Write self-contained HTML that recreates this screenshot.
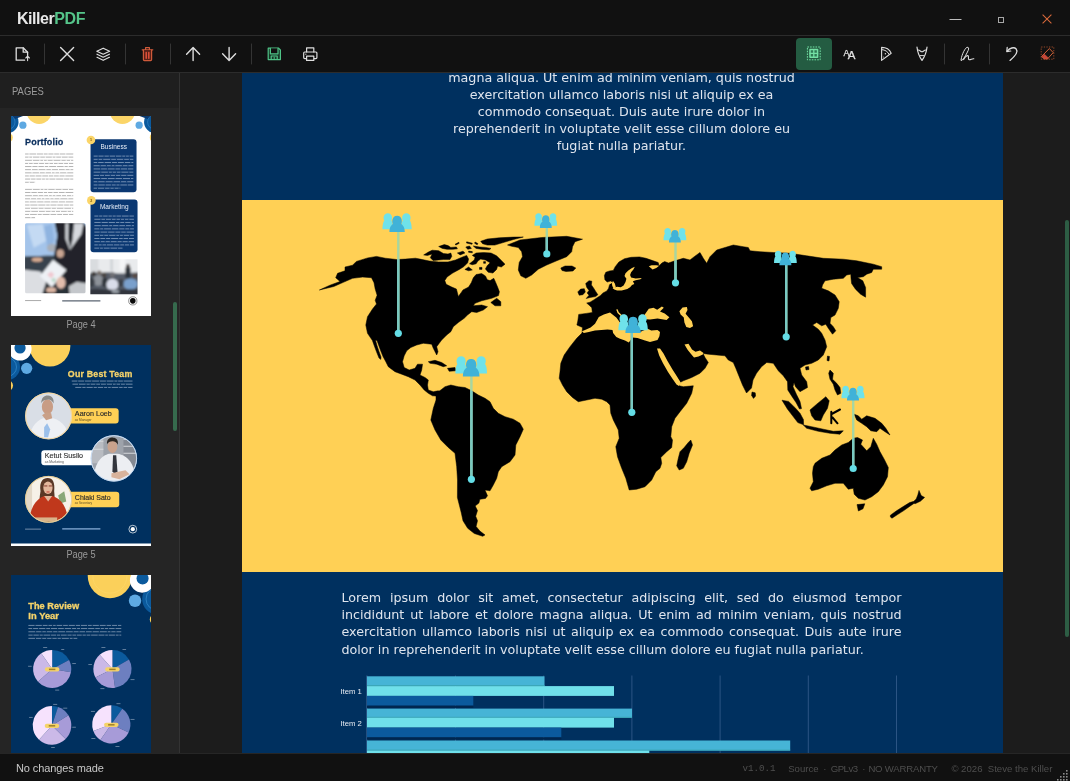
<!DOCTYPE html>
<html lang="en">
<head>
<meta charset="utf-8">
<title>KillerPDF</title>
<style>
*{box-sizing:border-box;margin:0;padding:0}
html,body{width:1070px;height:781px;overflow:hidden;background:#1c1c1c;font-family:"Liberation Sans",sans-serif;}
.abs{position:absolute}
#titlebar,#toolbar,#sidebar,#main,#status{will-change:transform}
#titlebar{position:absolute;left:0;top:0;width:1070px;height:36px;background:#111111;border-bottom:1px solid #2c2c2c}
#brand{position:absolute;left:17px;top:9px;font-size:16px;line-height:19px;font-weight:bold;color:#e8e8e8;letter-spacing:-0.45px;white-space:nowrap}
#brand span{color:#55c58a}
#toolbar{position:absolute;left:0;top:36px;width:1070px;height:37px;background:#111111;border-bottom:1px solid #2c2c2c}
.sep{position:absolute;top:7px;width:1px;height:22px;background:#343434}
.ico{position:absolute;top:0;left:0;overflow:visible}
#sidebar{position:absolute;left:0;top:73px;width:180px;height:680px;background:#252525;border-right:1px solid #333333;overflow:hidden}
#sidehead{position:absolute;left:0;top:0;width:179px;height:35px;background:#1f1f1f}
#sidehead span{position:absolute;left:12px;top:12px;font-size:11px;line-height:13px;color:#9a9a9a;transform:scaleX(0.86);transform-origin:0 0;white-space:nowrap}
.thumb{position:absolute;left:10.9px;width:140.6px;height:200.5px;overflow:hidden}
.thumb svg{width:100%;height:100%}
.tlabel{position:absolute;left:11px;width:140px;text-align:center;font-size:10px;line-height:12px;color:#9a9a9a;transform:scaleX(0.92)}
#sscroll{position:absolute;left:173px;top:228.5px;width:4px;height:129.5px;border-radius:2px;background:#366a4d}
#main{position:absolute;left:180px;top:73px;width:890px;height:680px;background:#1c1c1c;overflow:hidden}
#page{position:absolute;left:61.5px;top:0;width:761px;height:680px;background:#00305f;overflow:hidden}
#mscroll{position:absolute;left:885px;top:147px;width:4px;height:417px;border-radius:2px;background:#2d5d44}
#yellow{position:absolute;left:0;top:126.8px;width:761px;height:372.4px;background:#ffd055}
.ptxt{position:absolute;color:#dfe5ee;font-family:"DejaVu Sans","Liberation Sans",sans-serif;font-size:12.7px;line-height:17.1px;white-space:nowrap}
#status{position:absolute;left:0;top:753px;width:1070px;height:28px;background:#111111;border-top:1px solid #262626}
#status .l{position:absolute;left:16px;top:7.5px;font-size:11px;line-height:13px;color:#c8c8c8;letter-spacing:-0.1px}
#status .r{position:absolute;top:8.5px;font-size:9.6px;line-height:12px;color:#4e4e4e;white-space:nowrap}
</style>
</head>
<body>
<div id="titlebar">
  <div id="brand">Killer<span>PDF</span></div>
<svg class="abs" style="left:0;top:0" width="1070" height="36" viewBox="0 0 1070 36" fill="none">
<path d="M949.5 19.5H961.5" stroke="#bdbdbd" stroke-width="1"/>
<rect x="998.5" y="17.5" width="5" height="5" stroke="#a8a8a8" stroke-width="1"/>
<path d="M1042.6 14.6L1051.4 23.4M1051.4 14.6L1042.6 23.4" stroke="#d8693b" stroke-width="1.05"/>
</svg>

</div>
<div id="toolbar">
<svg class="abs" style="left:0;top:0" width="1070" height="37" viewBox="0 36 1070 37" fill="none" stroke-linecap="round" stroke-linejoin="round">
<g stroke="#343434" stroke-width="1"><path d="M44.5 44v20M125.5 44v20M170.5 44v20M251.5 44v20M944.5 44v20M989.5 44v20"/></g>
<rect x="796" y="38" width="36" height="32" rx="4" fill="#245c42"/>
<g stroke="#dedede" stroke-width="1.3">
<!-- new / open document -->
<path d="M27.6 55.6V52.2L23.2 47.8H16.2V60.2H24.6"/><path d="M23.2 47.8V52.2H27.6"/><path d="M27.6 60.6V56.4M25.8 58L27.6 56.2L29.4 58" stroke-width="1.1"/>
<!-- close -->
<path d="M60.6 47.6L73.6 60.6M73.6 47.6L60.6 60.6" stroke-width="1.4"/>
<!-- layers -->
<path d="M103.2 48.2L109.6 51.2L103.2 54.2L96.8 51.2Z" stroke-width="1.2"/><path d="M97 54.2L103.2 57.2L109.4 54.2M97 57.3L103.2 60.3L109.4 57.3" stroke-width="1.2"/>
<!-- arrows -->
<path d="M193.1 60.6V47.8M186.6 54.2L193.1 47.6L199.6 54.2" stroke-width="1.4"/>
<path d="M229.1 47.4V60.2M222.6 53.8L229.1 60.4L235.6 53.8" stroke-width="1.4"/>
<!-- print -->
<path d="M306.6 52V47.8H313.8V52" stroke-width="1.2"/><rect x="303.7" y="52" width="13.2" height="6.6" rx="1" stroke-width="1.2"/><rect x="306.6" y="56.2" width="7.2" height="4.2" fill="#111111" stroke-width="1.2"/><path d="M305.6 54.2h0.4" stroke-width="1"/>
<!-- highlighter / pizza -->
<path d="M881.6 47.4V60.4L891.2 53.2C889.6 49.6 886 47.4 881.6 47.4Z" stroke-width="1.1"/><path d="M881.8 49.6C885.2 49.8 887.8 51.6 889.2 54.4" stroke-width="1"/><circle cx="885.4" cy="53.8" r="0.7" fill="#dedede" stroke="none"/><circle cx="883.6" cy="57" r="0.5" fill="#dedede" stroke="none"/>
<!-- nib -->
<path d="M917 47.2C917.6 52.4 919.6 57 922 60.4C924.4 57 926.4 52.4 927 47.2" stroke-width="1.2"/><path d="M917.8 50.2C919.4 49.4 920.6 51.8 922 51.8C923.4 51.8 924.6 49.4 926.2 50.2" stroke-width="1.1"/><path d="M920.4 55.6H923.6" stroke-width="1"/>
<!-- signature -->
<path d="M961.2 60.2C960.6 57.6 964.4 48.6 966.8 47.4C968.8 46.6 969 48.6 968.2 50.4C966.8 53.6 964.2 58.2 962.4 60C961.8 60.6 961.4 60.6 961.2 60.2Z" stroke-width="1"/><path d="M963.6 59.6C965 56.8 967.2 55 968.2 55.8C969.2 56.8 967.4 59.4 969.2 59.8C970.8 60 972.2 58.4 973.8 58.8" stroke-width="1.1"/>
<!-- undo -->
<path d="M1007.2 47.4L1006.8 51.6L1010.8 51" stroke-width="1.2"/><path d="M1007.2 51.2C1009.6 48 1014 46.6 1016.2 49C1018.4 51.6 1016.6 54.8 1010 60.4" stroke-width="1.3"/>
</g>
<!-- AA as text -->
<g fill="#e2e2e2" stroke="#e2e2e2" stroke-width="0.25" font-family="'Liberation Sans',sans-serif"><text x="843.6" y="55.6" font-size="8.8">A</text><text x="847.8" y="59.1" font-size="11.5">A</text></g>
<!-- delete -->
<g stroke="#cf5a3a" stroke-width="1.2"><path d="M142.2 49.8H152.8M145.6 49.6V47.6H149.4V49.6"/><path d="M143.4 50V59.6C143.4 60.2 143.8 60.6 144.4 60.6H150.6C151.2 60.6 151.6 60.2 151.6 59.6V50" fill="#5a2118"/><path d="M146.2 52.4V58.2M148.8 52.4V58.2" stroke="#e0503a" stroke-width="1.5"/></g>
<!-- save -->
<g stroke="#4fc487" stroke-width="1.2"><path d="M268.2 48.2H278.6L280.4 50V59.6H268.2Z" fill="#173526"/><path d="M270.4 48.4V53.8H278V48.4" fill="#111"/><path d="M271.2 59.4V56H277.2V59.4" /><path d="M274.2 57.2v1.6" stroke-width="1"/></g>
<!-- select (active) -->
<g stroke="#73e0a4"><rect x="807.4" y="47" width="12.8" height="12.8" stroke-width="1" stroke-dasharray="1.6 1.1" stroke-linecap="butt"/><rect x="810" y="49.6" width="7.6" height="7.6" stroke-width="1.5" fill="#2f7a55"/><path d="M813.8 49.6V57.2M810 53.4H817.6" stroke-width="1.3"/></g>
<!-- erase -->
<g stroke="#cf6238"><rect x="1041.2" y="47" width="12.6" height="12.2" stroke-width="0.8" stroke-dasharray="1.3 1.3" stroke-linecap="butt" stroke="#b4562f"/><path d="M1049.6 48.8L1053.2 52.6L1047.6 58.8L1044 58.8L1042 56.6Z" stroke-width="1" fill="#111"/><path d="M1044.4 54.2L1048.4 58L1047.6 58.8H1044L1042 56.6Z" fill="#c9483a" stroke="#d8503c" stroke-width="0.6"/></g>
</svg>

</div>
<div id="sidebar">
  <div id="sidehead"><span>PAGES</span></div>
  <div class="thumb" id="t4" style="top:42.8px;background:#ffffff">
<svg viewBox="0 0 140 200" preserveAspectRatio="none" style="display:block">
<defs><filter id="b1" x="-5%" y="-5%" width="110%" height="110%"><feGaussianBlur stdDeviation="0.9"/></filter><filter id="b0"><feGaussianBlur stdDeviation="0.35"/></filter><clipPath id="cp1"><rect x="14" y="107" width="60.2" height="69.8" rx="1.5"/></clipPath><clipPath id="cp2"><rect x="79" y="143" width="47" height="34.8"/></clipPath></defs>
<rect width="140" height="200" fill="#ffffff"/>
<circle cx="28" cy="-4.5" r="12.5" fill="#fbd568"/><circle cx="111" cy="-4.5" r="12.5" fill="#fbd568"/>
<circle cx="-3.5" cy="6" r="11" fill="#0b5a9d"/><circle cx="143.5" cy="6" r="11" fill="#0b5a9d"/><path d="M0 0H12L4 3Z M140 0H128L136 3Z" fill="#0a3a70"/>
<circle cx="-3.5" cy="6" r="7.5" fill="none" stroke="#3f8fd0" stroke-width="0.5"/><circle cx="143.5" cy="6" r="7.5" fill="none" stroke="#3f8fd0" stroke-width="0.5"/>
<circle cx="11.8" cy="9.2" r="3.6" fill="#5ea9e2"/><circle cx="127.6" cy="9.2" r="3.6" fill="#5ea9e2"/>
<circle cx="-2.2" cy="21.5" r="4" fill="#fbd568"/><circle cx="142.2" cy="21.5" r="4" fill="#fbd568"/>
<text x="14" y="29.2" font-family="'Liberation Sans',sans-serif" font-weight="bold" font-size="9" letter-spacing="0.15" fill="#0b2f5e" stroke="#0b2f5e" stroke-width="0.25">Portfolio</text>
<g filter="url(#b0)">
<g fill="#6a6a6a" opacity="0.5"><rect x="14.0" y="37.4" width="48.0" height="1.0"/><rect x="14.0" y="40.5" width="48.0" height="1.0"/><rect x="14.0" y="43.7" width="48.0" height="1.0"/><rect x="14.0" y="46.8" width="48.0" height="1.0"/><rect x="14.0" y="49.9" width="48.0" height="1.0"/><rect x="14.0" y="53.0" width="48.0" height="1.0"/><rect x="14.0" y="56.2" width="48.0" height="1.0"/><rect x="14.0" y="59.3" width="48.0" height="1.0"/><rect x="14.0" y="62.4" width="48.0" height="1.0"/><rect x="14.0" y="65.6" width="10.0" height="1.0"/></g>
<g fill="#6a6a6a" opacity="0.5"><rect x="14.0" y="72.7" width="48.0" height="1.0"/><rect x="14.0" y="75.8" width="48.0" height="1.0"/><rect x="14.0" y="79.0" width="48.0" height="1.0"/><rect x="14.0" y="82.1" width="48.0" height="1.0"/><rect x="14.0" y="85.2" width="48.0" height="1.0"/><rect x="14.0" y="88.3" width="48.0" height="1.0"/><rect x="14.0" y="91.5" width="48.0" height="1.0"/><rect x="14.0" y="94.6" width="48.0" height="1.0"/><rect x="14.0" y="97.7" width="48.0" height="1.0"/><rect x="14.0" y="100.9" width="10.0" height="1.0"/></g>
</g>
<rect x="79.2" y="23.2" width="45.8" height="52.8" rx="3" fill="#0b3872"/>
<rect x="79.2" y="83.4" width="46.8" height="52.6" rx="3" fill="#0b3872"/>
<circle cx="79.6" cy="24" r="4.3" fill="#fbd568"/><circle cx="80" cy="84.2" r="4.3" fill="#fbd568"/>
<g font-family="'Liberation Sans',sans-serif" fill="#7a5a10" font-size="3.6" font-weight="bold" text-anchor="middle"><text x="79.6" y="25.3">1</text><text x="80" y="85.5">2</text></g>
<g font-family="'Liberation Sans',sans-serif" fill="#e8eef8" font-size="6.5" text-anchor="middle"><text x="102.3" y="32.8">Business</text><text x="102.8" y="92.9">Marketing</text></g>
<g filter="url(#b0)">
<g fill="#d5e0f0" opacity="0.5"><rect x="82.3" y="39.5" width="39.5" height="1.0"/><rect x="82.3" y="42.7" width="39.5" height="1.0"/><rect x="82.3" y="45.9" width="39.5" height="1.0"/><rect x="82.3" y="49.1" width="39.5" height="1.0"/><rect x="82.3" y="52.3" width="39.5" height="1.0"/><rect x="82.3" y="55.5" width="39.5" height="1.0"/><rect x="82.3" y="58.7" width="39.5" height="1.0"/><rect x="82.3" y="61.9" width="39.5" height="1.0"/><rect x="82.3" y="65.1" width="39.5" height="1.0"/><rect x="82.3" y="68.3" width="39.5" height="1.0"/><rect x="82.3" y="71.5" width="26.7" height="1.0"/></g>
<g fill="#d5e0f0" opacity="0.5"><rect x="83.0" y="99.3" width="39.4" height="1.0"/><rect x="83.0" y="102.5" width="39.4" height="1.0"/><rect x="83.0" y="105.7" width="39.4" height="1.0"/><rect x="83.0" y="108.9" width="39.4" height="1.0"/><rect x="83.0" y="112.1" width="39.4" height="1.0"/><rect x="83.0" y="115.3" width="39.4" height="1.0"/><rect x="83.0" y="118.5" width="39.4" height="1.0"/><rect x="83.0" y="121.7" width="39.4" height="1.0"/><rect x="83.0" y="124.9" width="39.4" height="1.0"/><rect x="83.0" y="128.1" width="39.4" height="1.0"/><rect x="83.0" y="131.3" width="28.0" height="1.0"/></g>
</g>
<g fill="#ffffff"><rect x="17.5" y="37.1" width="0.9" height="1.6"/><rect x="24.9" y="37.1" width="0.9" height="1.6"/><rect x="31.8" y="37.1" width="0.9" height="1.6"/><rect x="36.4" y="37.1" width="0.9" height="1.6"/><rect x="42.2" y="37.1" width="0.9" height="1.6"/><rect x="47.7" y="37.1" width="0.9" height="1.6"/><rect x="54.1" y="37.1" width="0.9" height="1.6"/><rect x="17.4" y="40.2" width="0.9" height="1.6"/><rect x="21.0" y="40.2" width="0.9" height="1.6"/><rect x="28.3" y="40.2" width="0.9" height="1.6"/><rect x="33.7" y="40.2" width="0.9" height="1.6"/><rect x="40.6" y="40.2" width="0.9" height="1.6"/><rect x="44.2" y="40.2" width="0.9" height="1.6"/><rect x="49.7" y="40.2" width="0.9" height="1.6"/><rect x="56.4" y="40.2" width="0.9" height="1.6"/><rect x="20.8" y="43.4" width="0.9" height="1.6"/><rect x="28.3" y="43.4" width="0.9" height="1.6"/><rect x="32.0" y="43.4" width="0.9" height="1.6"/><rect x="35.6" y="43.4" width="0.9" height="1.6"/><rect x="41.5" y="43.4" width="0.9" height="1.6"/><rect x="49.3" y="43.4" width="0.9" height="1.6"/><rect x="54.5" y="43.4" width="0.9" height="1.6"/><rect x="58.9" y="43.4" width="0.9" height="1.6"/><rect x="17.1" y="46.5" width="0.9" height="1.6"/><rect x="21.6" y="46.5" width="0.9" height="1.6"/><rect x="27.1" y="46.5" width="0.9" height="1.6"/><rect x="32.8" y="46.5" width="0.9" height="1.6"/><rect x="37.4" y="46.5" width="0.9" height="1.6"/><rect x="41.9" y="46.5" width="0.9" height="1.6"/><rect x="46.4" y="46.5" width="0.9" height="1.6"/><rect x="52.0" y="46.5" width="0.9" height="1.6"/><rect x="56.8" y="46.5" width="0.9" height="1.6"/><rect x="20.4" y="49.6" width="0.9" height="1.6"/><rect x="26.4" y="49.6" width="0.9" height="1.6"/><rect x="32.7" y="49.6" width="0.9" height="1.6"/><rect x="37.1" y="49.6" width="0.9" height="1.6"/><rect x="45.0" y="49.6" width="0.9" height="1.6"/><rect x="52.4" y="49.6" width="0.9" height="1.6"/><rect x="56.5" y="49.6" width="0.9" height="1.6"/><rect x="19.9" y="52.8" width="0.9" height="1.6"/><rect x="26.6" y="52.8" width="0.9" height="1.6"/><rect x="34.3" y="52.8" width="0.9" height="1.6"/><rect x="39.7" y="52.8" width="0.9" height="1.6"/><rect x="46.9" y="52.8" width="0.9" height="1.6"/><rect x="53.5" y="52.8" width="0.9" height="1.6"/><rect x="58.3" y="52.8" width="0.9" height="1.6"/><rect x="20.5" y="55.9" width="0.9" height="1.6"/><rect x="27.8" y="55.9" width="0.9" height="1.6"/><rect x="33.6" y="55.9" width="0.9" height="1.6"/><rect x="39.8" y="55.9" width="0.9" height="1.6"/><rect x="43.4" y="55.9" width="0.9" height="1.6"/><rect x="48.0" y="55.9" width="0.9" height="1.6"/><rect x="55.1" y="55.9" width="0.9" height="1.6"/><rect x="17.7" y="59.0" width="0.9" height="1.6"/><rect x="23.7" y="59.0" width="0.9" height="1.6"/><rect x="30.3" y="59.0" width="0.9" height="1.6"/><rect x="36.9" y="59.0" width="0.9" height="1.6"/><rect x="42.0" y="59.0" width="0.9" height="1.6"/><rect x="47.5" y="59.0" width="0.9" height="1.6"/><rect x="53.3" y="59.0" width="0.9" height="1.6"/><rect x="19.1" y="62.1" width="0.9" height="1.6"/><rect x="24.4" y="62.1" width="0.9" height="1.6"/><rect x="30.1" y="62.1" width="0.9" height="1.6"/><rect x="33.7" y="62.1" width="0.9" height="1.6"/><rect x="37.4" y="62.1" width="0.9" height="1.6"/><rect x="44.1" y="62.1" width="0.9" height="1.6"/><rect x="52.0" y="62.1" width="0.9" height="1.6"/><rect x="58.1" y="62.1" width="0.9" height="1.6"/><rect x="17.7" y="65.3" width="0.9" height="1.6"/><rect x="23.4" y="65.3" width="0.9" height="1.6"/><rect x="31.4" y="65.3" width="0.9" height="1.6"/><rect x="38.3" y="65.3" width="0.9" height="1.6"/><rect x="44.3" y="65.3" width="0.9" height="1.6"/><rect x="51.6" y="65.3" width="0.9" height="1.6"/><rect x="56.2" y="65.3" width="0.9" height="1.6"/></g><g fill="#ffffff"><rect x="20.8" y="72.4" width="0.9" height="1.6"/><rect x="28.6" y="72.4" width="0.9" height="1.6"/><rect x="32.3" y="72.4" width="0.9" height="1.6"/><rect x="36.2" y="72.4" width="0.9" height="1.6"/><rect x="43.5" y="72.4" width="0.9" height="1.6"/><rect x="50.3" y="72.4" width="0.9" height="1.6"/><rect x="56.8" y="72.4" width="0.9" height="1.6"/><rect x="19.4" y="75.5" width="0.9" height="1.6"/><rect x="25.7" y="75.5" width="0.9" height="1.6"/><rect x="31.8" y="75.5" width="0.9" height="1.6"/><rect x="36.0" y="75.5" width="0.9" height="1.6"/><rect x="41.4" y="75.5" width="0.9" height="1.6"/><rect x="46.7" y="75.5" width="0.9" height="1.6"/><rect x="53.4" y="75.5" width="0.9" height="1.6"/><rect x="20.8" y="78.7" width="0.9" height="1.6"/><rect x="26.7" y="78.7" width="0.9" height="1.6"/><rect x="32.2" y="78.7" width="0.9" height="1.6"/><rect x="37.0" y="78.7" width="0.9" height="1.6"/><rect x="40.6" y="78.7" width="0.9" height="1.6"/><rect x="44.2" y="78.7" width="0.9" height="1.6"/><rect x="49.8" y="78.7" width="0.9" height="1.6"/><rect x="54.8" y="78.7" width="0.9" height="1.6"/><rect x="60.0" y="78.7" width="0.9" height="1.6"/><rect x="19.1" y="81.8" width="0.9" height="1.6"/><rect x="25.1" y="81.8" width="0.9" height="1.6"/><rect x="29.7" y="81.8" width="0.9" height="1.6"/><rect x="33.3" y="81.8" width="0.9" height="1.6"/><rect x="38.3" y="81.8" width="0.9" height="1.6"/><rect x="42.4" y="81.8" width="0.9" height="1.6"/><rect x="48.2" y="81.8" width="0.9" height="1.6"/><rect x="56.2" y="81.8" width="0.9" height="1.6"/><rect x="17.7" y="84.9" width="0.9" height="1.6"/><rect x="25.2" y="84.9" width="0.9" height="1.6"/><rect x="32.3" y="84.9" width="0.9" height="1.6"/><rect x="39.1" y="84.9" width="0.9" height="1.6"/><rect x="46.7" y="84.9" width="0.9" height="1.6"/><rect x="53.7" y="84.9" width="0.9" height="1.6"/><rect x="18.4" y="88.0" width="0.9" height="1.6"/><rect x="26.3" y="88.0" width="0.9" height="1.6"/><rect x="34.2" y="88.0" width="0.9" height="1.6"/><rect x="38.4" y="88.0" width="0.9" height="1.6"/><rect x="45.3" y="88.0" width="0.9" height="1.6"/><rect x="52.0" y="88.0" width="0.9" height="1.6"/><rect x="57.6" y="88.0" width="0.9" height="1.6"/><rect x="19.0" y="91.2" width="0.9" height="1.6"/><rect x="26.6" y="91.2" width="0.9" height="1.6"/><rect x="32.4" y="91.2" width="0.9" height="1.6"/><rect x="39.6" y="91.2" width="0.9" height="1.6"/><rect x="44.7" y="91.2" width="0.9" height="1.6"/><rect x="52.2" y="91.2" width="0.9" height="1.6"/><rect x="59.7" y="91.2" width="0.9" height="1.6"/><rect x="19.3" y="94.3" width="0.9" height="1.6"/><rect x="26.9" y="94.3" width="0.9" height="1.6"/><rect x="33.7" y="94.3" width="0.9" height="1.6"/><rect x="39.4" y="94.3" width="0.9" height="1.6"/><rect x="43.9" y="94.3" width="0.9" height="1.6"/><rect x="48.8" y="94.3" width="0.9" height="1.6"/><rect x="55.5" y="94.3" width="0.9" height="1.6"/><rect x="59.7" y="94.3" width="0.9" height="1.6"/><rect x="18.1" y="97.4" width="0.9" height="1.6"/><rect x="25.7" y="97.4" width="0.9" height="1.6"/><rect x="30.6" y="97.4" width="0.9" height="1.6"/><rect x="38.4" y="97.4" width="0.9" height="1.6"/><rect x="45.1" y="97.4" width="0.9" height="1.6"/><rect x="50.8" y="97.4" width="0.9" height="1.6"/><rect x="56.7" y="97.4" width="0.9" height="1.6"/><rect x="19.4" y="100.6" width="0.9" height="1.6"/><rect x="24.3" y="100.6" width="0.9" height="1.6"/><rect x="28.7" y="100.6" width="0.9" height="1.6"/><rect x="34.5" y="100.6" width="0.9" height="1.6"/><rect x="42.2" y="100.6" width="0.9" height="1.6"/><rect x="48.5" y="100.6" width="0.9" height="1.6"/><rect x="52.3" y="100.6" width="0.9" height="1.6"/><rect x="59.5" y="100.6" width="0.9" height="1.6"/></g><g fill="#0b3872"><rect x="86.3" y="39.2" width="0.9" height="1.6"/><rect x="92.2" y="39.2" width="0.9" height="1.6"/><rect x="97.4" y="39.2" width="0.9" height="1.6"/><rect x="103.6" y="39.2" width="0.9" height="1.6"/><rect x="109.9" y="39.2" width="0.9" height="1.6"/><rect x="113.7" y="39.2" width="0.9" height="1.6"/><rect x="117.3" y="39.2" width="0.9" height="1.6"/><rect x="86.3" y="42.4" width="0.9" height="1.6"/><rect x="90.9" y="42.4" width="0.9" height="1.6"/><rect x="98.9" y="42.4" width="0.9" height="1.6"/><rect x="104.5" y="42.4" width="0.9" height="1.6"/><rect x="111.8" y="42.4" width="0.9" height="1.6"/><rect x="117.4" y="42.4" width="0.9" height="1.6"/><rect x="85.9" y="45.6" width="0.9" height="1.6"/><rect x="92.3" y="45.6" width="0.9" height="1.6"/><rect x="99.7" y="45.6" width="0.9" height="1.6"/><rect x="105.5" y="45.6" width="0.9" height="1.6"/><rect x="112.4" y="45.6" width="0.9" height="1.6"/><rect x="118.9" y="45.6" width="0.9" height="1.6"/><rect x="88.3" y="48.8" width="0.9" height="1.6"/><rect x="94.5" y="48.8" width="0.9" height="1.6"/><rect x="99.3" y="48.8" width="0.9" height="1.6"/><rect x="103.0" y="48.8" width="0.9" height="1.6"/><rect x="110.4" y="48.8" width="0.9" height="1.6"/><rect x="116.0" y="48.8" width="0.9" height="1.6"/><rect x="88.8" y="52.0" width="0.9" height="1.6"/><rect x="95.5" y="52.0" width="0.9" height="1.6"/><rect x="103.2" y="52.0" width="0.9" height="1.6"/><rect x="108.5" y="52.0" width="0.9" height="1.6"/><rect x="115.6" y="52.0" width="0.9" height="1.6"/><rect x="89.0" y="55.2" width="0.9" height="1.6"/><rect x="96.5" y="55.2" width="0.9" height="1.6"/><rect x="100.4" y="55.2" width="0.9" height="1.6"/><rect x="104.5" y="55.2" width="0.9" height="1.6"/><rect x="109.0" y="55.2" width="0.9" height="1.6"/><rect x="116.9" y="55.2" width="0.9" height="1.6"/><rect x="87.8" y="58.4" width="0.9" height="1.6"/><rect x="92.7" y="58.4" width="0.9" height="1.6"/><rect x="98.4" y="58.4" width="0.9" height="1.6"/><rect x="103.7" y="58.4" width="0.9" height="1.6"/><rect x="108.8" y="58.4" width="0.9" height="1.6"/><rect x="114.9" y="58.4" width="0.9" height="1.6"/><rect x="88.9" y="61.6" width="0.9" height="1.6"/><rect x="95.5" y="61.6" width="0.9" height="1.6"/><rect x="103.2" y="61.6" width="0.9" height="1.6"/><rect x="110.5" y="61.6" width="0.9" height="1.6"/><rect x="118.5" y="61.6" width="0.9" height="1.6"/><rect x="86.0" y="64.8" width="0.9" height="1.6"/><rect x="93.3" y="64.8" width="0.9" height="1.6"/><rect x="101.2" y="64.8" width="0.9" height="1.6"/><rect x="108.7" y="64.8" width="0.9" height="1.6"/><rect x="114.8" y="64.8" width="0.9" height="1.6"/><rect x="86.1" y="68.0" width="0.9" height="1.6"/><rect x="93.4" y="68.0" width="0.9" height="1.6"/><rect x="99.5" y="68.0" width="0.9" height="1.6"/><rect x="104.2" y="68.0" width="0.9" height="1.6"/><rect x="108.0" y="68.0" width="0.9" height="1.6"/><rect x="115.4" y="68.0" width="0.9" height="1.6"/><rect x="85.7" y="71.2" width="0.9" height="1.6"/><rect x="92.8" y="71.2" width="0.9" height="1.6"/><rect x="98.1" y="71.2" width="0.9" height="1.6"/><rect x="102.3" y="71.2" width="0.9" height="1.6"/><rect x="107.1" y="71.2" width="0.9" height="1.6"/><rect x="114.1" y="71.2" width="0.9" height="1.6"/></g><g fill="#0b3872"><rect x="86.9" y="99.0" width="0.9" height="1.6"/><rect x="90.9" y="99.0" width="0.9" height="1.6"/><rect x="96.2" y="99.0" width="0.9" height="1.6"/><rect x="100.4" y="99.0" width="0.9" height="1.6"/><rect x="104.2" y="99.0" width="0.9" height="1.6"/><rect x="109.5" y="99.0" width="0.9" height="1.6"/><rect x="117.1" y="99.0" width="0.9" height="1.6"/><rect x="89.1" y="102.2" width="0.9" height="1.6"/><rect x="93.6" y="102.2" width="0.9" height="1.6"/><rect x="99.5" y="102.2" width="0.9" height="1.6"/><rect x="104.2" y="102.2" width="0.9" height="1.6"/><rect x="108.5" y="102.2" width="0.9" height="1.6"/><rect x="112.5" y="102.2" width="0.9" height="1.6"/><rect x="116.9" y="102.2" width="0.9" height="1.6"/><rect x="89.3" y="105.4" width="0.9" height="1.6"/><rect x="96.4" y="105.4" width="0.9" height="1.6"/><rect x="103.5" y="105.4" width="0.9" height="1.6"/><rect x="107.9" y="105.4" width="0.9" height="1.6"/><rect x="112.8" y="105.4" width="0.9" height="1.6"/><rect x="119.1" y="105.4" width="0.9" height="1.6"/><rect x="89.4" y="108.6" width="0.9" height="1.6"/><rect x="96.9" y="108.6" width="0.9" height="1.6"/><rect x="100.8" y="108.6" width="0.9" height="1.6"/><rect x="107.0" y="108.6" width="0.9" height="1.6"/><rect x="113.5" y="108.6" width="0.9" height="1.6"/><rect x="119.3" y="108.6" width="0.9" height="1.6"/><rect x="87.9" y="111.8" width="0.9" height="1.6"/><rect x="91.8" y="111.8" width="0.9" height="1.6"/><rect x="99.5" y="111.8" width="0.9" height="1.6"/><rect x="106.9" y="111.8" width="0.9" height="1.6"/><rect x="112.9" y="111.8" width="0.9" height="1.6"/><rect x="117.7" y="111.8" width="0.9" height="1.6"/><rect x="88.3" y="115.0" width="0.9" height="1.6"/><rect x="95.8" y="115.0" width="0.9" height="1.6"/><rect x="103.1" y="115.0" width="0.9" height="1.6"/><rect x="108.9" y="115.0" width="0.9" height="1.6"/><rect x="114.2" y="115.0" width="0.9" height="1.6"/><rect x="87.7" y="118.2" width="0.9" height="1.6"/><rect x="92.0" y="118.2" width="0.9" height="1.6"/><rect x="96.8" y="118.2" width="0.9" height="1.6"/><rect x="104.0" y="118.2" width="0.9" height="1.6"/><rect x="107.7" y="118.2" width="0.9" height="1.6"/><rect x="111.4" y="118.2" width="0.9" height="1.6"/><rect x="117.7" y="118.2" width="0.9" height="1.6"/><rect x="88.1" y="121.4" width="0.9" height="1.6"/><rect x="93.8" y="121.4" width="0.9" height="1.6"/><rect x="98.8" y="121.4" width="0.9" height="1.6"/><rect x="106.8" y="121.4" width="0.9" height="1.6"/><rect x="111.2" y="121.4" width="0.9" height="1.6"/><rect x="116.5" y="121.4" width="0.9" height="1.6"/><rect x="88.5" y="124.6" width="0.9" height="1.6"/><rect x="93.3" y="124.6" width="0.9" height="1.6"/><rect x="98.4" y="124.6" width="0.9" height="1.6"/><rect x="105.2" y="124.6" width="0.9" height="1.6"/><rect x="110.2" y="124.6" width="0.9" height="1.6"/><rect x="116.2" y="124.6" width="0.9" height="1.6"/><rect x="86.4" y="127.8" width="0.9" height="1.6"/><rect x="90.2" y="127.8" width="0.9" height="1.6"/><rect x="94.7" y="127.8" width="0.9" height="1.6"/><rect x="101.7" y="127.8" width="0.9" height="1.6"/><rect x="107.9" y="127.8" width="0.9" height="1.6"/><rect x="112.5" y="127.8" width="0.9" height="1.6"/><rect x="117.5" y="127.8" width="0.9" height="1.6"/><rect x="87.8" y="131.0" width="0.9" height="1.6"/><rect x="91.5" y="131.0" width="0.9" height="1.6"/><rect x="98.2" y="131.0" width="0.9" height="1.6"/><rect x="105.7" y="131.0" width="0.9" height="1.6"/><rect x="113.5" y="131.0" width="0.9" height="1.6"/><rect x="120.3" y="131.0" width="0.9" height="1.6"/></g>
<g clip-path="url(#cp1)"><g filter="url(#b1)">
<rect x="10" y="103" width="70" height="80" fill="#2a3038"/>
<path d="M10 103H42.9L46.3 119.1L42.9 139.4H35L10 140.5Z" fill="#a4c4ea"/>
<path d="M15.9 109L31.6 107.8L35 124.7L22.6 131.5Z" fill="#c4daf3"/>
<path d="M33 110L41 108L43 124L37 136Z" fill="#8fb4e0"/>
<path d="M10 140.5L35 139.4H42.9L48.5 155.2L37.3 160.8L10 152.9Z" fill="#38434d"/>
<ellipse cx="26" cy="143.3" rx="5.5" ry="2.2" fill="#d9ac92"/>
<ellipse cx="40.7" cy="131.5" rx="5" ry="4" fill="#a9afb8"/>
<path d="M42.9 103H80V183H57.6L54.2 160.8L48.5 155.2L42.9 139.4L46.3 119.1Z" fill="#20242a"/>
<path d="M54.2 107L72.2 107L70 118L58.7 133.7L54.2 122.5Z" fill="#d6d9de"/>
<path d="M57.2 106H63L61.2 124L59.2 132.4L56.8 123Z" fill="#22262d"/>
<path d="M68.8 103H80V114.6Z" fill="#a4c4ea"/>
<ellipse cx="49.1" cy="137.1" rx="3.6" ry="4.2" fill="#c9a592"/>
<path d="M10 152.9L29.4 155.2L35 165.3L29.4 183H10Z" fill="#dcdee2"/>
<path d="M28.8 159.7L41.8 143.3L55.3 153.5L40.6 170.9Z" fill="#eef1f5"/>
<path d="M36 158l4 -3l3 3l-3 4z" fill="#f0c8d0"/><path d="M40 163l3 -2l2 3l-3 2z" fill="#b8d8c8"/>
<ellipse cx="49.7" cy="166.4" rx="4.6" ry="6" fill="#e2bcab"/>
<ellipse cx="40" cy="173.5" rx="5" ry="2.6" fill="#dcb5a2"/>
<path d="M57.6 169.8L65.4 165.3L80 167.6V183H58.7Z" fill="#c4c7cb"/>
</g></g>
<g clip-path="url(#cp2)"><g filter="url(#b1)">
<rect x="76" y="140" width="54" height="42" fill="#e9ebed"/>
<rect x="76" y="140" width="11" height="17" fill="#d9dcdf"/><rect x="99" y="140" width="2.4" height="15" fill="#cdd1d5"/><rect x="108" y="140" width="6" height="14" fill="#f4f5f6"/>
<path d="M76 158C82 155 88 157 94 156C100 155 106 158 112 157C118 156 124 157 130 155V182H76Z" fill="#555c67"/>
<rect x="113.9" y="150.9" width="5.2" height="11" rx="1" fill="#2c3037"/><circle cx="116.4" cy="149.6" r="1.9" fill="#3a3330"/>
<ellipse cx="82.3" cy="157.6" rx="2.2" ry="2.4" fill="#3b3632"/><ellipse cx="88" cy="156.4" rx="2.2" ry="2.4" fill="#7a716a"/><ellipse cx="92.7" cy="158.6" rx="2.2" ry="2.4" fill="#4a433e"/><ellipse cx="101" cy="158.4" rx="2.5" ry="2.7" fill="#6f6f74"/><ellipse cx="123.5" cy="159" rx="2.3" ry="2.5" fill="#5a4a40"/>
<ellipse cx="86.8" cy="164" rx="5" ry="5.4" fill="#8d9299"/><ellipse cx="80" cy="166" rx="3.4" ry="5" fill="#3a3f47"/><ellipse cx="93.5" cy="166" rx="3" ry="5" fill="#2f343b"/>
<ellipse cx="100.9" cy="168.1" rx="6" ry="5.8" fill="#d9ddea"/><ellipse cx="119" cy="167.6" rx="7.2" ry="5.6" fill="#7aa0cc"/><ellipse cx="109.5" cy="166.5" rx="2.6" ry="4" fill="#3a3f47"/>
<path d="M76 173C86 171 96 174 104 173C112 172 122 174 130 172V182H76Z" fill="#30353c"/>
<ellipse cx="104" cy="175" rx="4" ry="1.6" fill="#9aa0a8"/>
</g></g>
<rect x="14" y="183.6" width="16" height="1" fill="#888" opacity="0.7"/>
<rect x="51" y="184" width="38" height="0.9" fill="#1c2a3c"/>
<circle cx="121.3" cy="184.4" r="4.1" fill="#fff" stroke="#222" stroke-width="0.5"/><circle cx="121.3" cy="184.4" r="2.8" fill="#0a0a0a"/>
</svg>
</div>
  <div class="tlabel" style="top:246.4px">Page 4</div>
  <div class="thumb" id="t5" style="top:272.4px;background:#ffffff">
<svg viewBox="0 0 140 200" preserveAspectRatio="none" style="display:block">
<defs><filter id="c1" x="-5%" y="-5%" width="110%" height="110%"><feGaussianBlur stdDeviation="0.7"/></filter><filter id="c0"><feGaussianBlur stdDeviation="0.3"/></filter>
<clipPath id="pc1"><circle cx="37.4" cy="70.8" r="22.4"/></clipPath><clipPath id="pc2"><circle cx="102.4" cy="113.1" r="22.3"/></clipPath><clipPath id="pc3"><circle cx="37.4" cy="154" r="22.6"/></clipPath></defs>
<rect width="140" height="200" fill="#ffffff"/><rect width="140" height="198" fill="#00305f"/>
<circle cx="38.7" cy="1" r="20.4" fill="#fbd05a"/>
<circle cx="-4" cy="22" r="13" fill="#0b5a9d"/><circle cx="-4" cy="22" r="9.5" fill="none" stroke="#4aa3e0" stroke-width="0.5"/>
<circle cx="9" cy="4" r="11.5" fill="#ffffff"/><circle cx="9" cy="3" r="5.6" fill="#0b5a9d"/>
<circle cx="15.6" cy="23.3" r="5.6" fill="#5ea9e2"/>
<circle cx="-3.6" cy="40.5" r="5.6" fill="#fbd05a"/>
<text x="121" y="32" font-family="'Liberation Sans',sans-serif" font-weight="bold" font-size="8.8" fill="#f5d36a" stroke="#f5d36a" stroke-width="0.3" text-anchor="end" letter-spacing="0.2">Our Best Team</text>
<g filter="url(#c0)"><g fill="#c9d4e6" opacity="0.6"><rect x="60.5" y="35.5" width="60.5" height="0.9"/><rect x="61.2" y="38.6" width="59.8" height="0.9"/><rect x="64.0" y="41.8" width="57.0" height="0.9"/></g></g>
<g fill="#00305f"><rect x="66.0" y="35.2" width="0.9" height="1.6"/><rect x="72.8" y="35.2" width="0.9" height="1.6"/><rect x="79.9" y="35.2" width="0.9" height="1.6"/><rect x="87.6" y="35.2" width="0.9" height="1.6"/><rect x="94.5" y="35.2" width="0.9" height="1.6"/><rect x="102.1" y="35.2" width="0.9" height="1.6"/><rect x="105.8" y="35.2" width="0.9" height="1.6"/><rect x="111.4" y="35.2" width="0.9" height="1.6"/><rect x="66.8" y="38.3" width="0.9" height="1.6"/><rect x="74.3" y="38.3" width="0.9" height="1.6"/><rect x="78.4" y="38.3" width="0.9" height="1.6"/><rect x="84.0" y="38.3" width="0.9" height="1.6"/><rect x="88.6" y="38.3" width="0.9" height="1.6"/><rect x="94.5" y="38.3" width="0.9" height="1.6"/><rect x="100.6" y="38.3" width="0.9" height="1.6"/><rect x="104.2" y="38.3" width="0.9" height="1.6"/><rect x="108.6" y="38.3" width="0.9" height="1.6"/><rect x="113.4" y="38.3" width="0.9" height="1.6"/><rect x="70.1" y="41.4" width="0.9" height="1.6"/><rect x="74.3" y="41.4" width="0.9" height="1.6"/><rect x="81.4" y="41.4" width="0.9" height="1.6"/><rect x="85.5" y="41.4" width="0.9" height="1.6"/><rect x="91.8" y="41.4" width="0.9" height="1.6"/><rect x="95.8" y="41.4" width="0.9" height="1.6"/><rect x="99.3" y="41.4" width="0.9" height="1.6"/><rect x="106.8" y="41.4" width="0.9" height="1.6"/><rect x="111.2" y="41.4" width="0.9" height="1.6"/><rect x="115.7" y="41.4" width="0.9" height="1.6"/></g>
<rect x="50" y="63" width="57.2" height="15.2" rx="3" fill="#ffd055"/>
<circle cx="37.4" cy="70.8" r="23.3" fill="#f0d7a8"/>
<g clip-path="url(#pc1)"><g filter="url(#c1)"><rect x="12" y="45" width="52" height="52" fill="#d9dee6"/>
<path d="M18 97C18 84 24 76 32 73L42 73C52 76 58 84 58 97Z" fill="#eef0f4"/>
<ellipse cx="36.3" cy="61.5" rx="5.6" ry="7.4" fill="#c89c84"/><path d="M30.2 58C30 52 34 50 37 50.4C41 50.6 43 54 42.4 58.4C41 55 38 54 36 54.6C33 54.8 31 56 30.2 58Z" fill="#8a8884"/>
<path d="M31 70l4 -3l5 1l1 5l-6 2z" fill="#c9a088"/><path d="M33 82l3 -4l3 6l-2 8l-4 0z" fill="#9cc0ea"/>
</g></g>
<circle cx="37.4" cy="70.8" r="22.9" fill="none" stroke="#f0d7a8" stroke-width="0.9"/>
<text x="63.6" y="71.2" font-family="'Liberation Sans',sans-serif" font-size="6.3" fill="#2a2a2a" stroke="#2a2a2a" stroke-width="0.12" textLength="36.8" lengthAdjust="spacingAndGlyphs">Aaron Loeb</text>
<text x="63.6" y="75.6" font-family="'Liberation Sans',sans-serif" font-size="2.9" fill="#5a4a20" textLength="16.6" lengthAdjust="spacingAndGlyphs">as Manager</text>
<rect x="30.2" y="105" width="55" height="15" rx="3" fill="#ffffff"/>
<text x="33.7" y="113.2" font-family="'Liberation Sans',sans-serif" font-size="6.3" fill="#333" stroke="#333" stroke-width="0.12" textLength="38.1" lengthAdjust="spacingAndGlyphs">Ketut Susilo</text>
<text x="33.7" y="117.4" font-family="'Liberation Sans',sans-serif" font-size="2.9" fill="#555" textLength="19" lengthAdjust="spacingAndGlyphs">as Marketing</text>
<circle cx="102.4" cy="113.1" r="23" fill="#c9dcf2"/>
<g clip-path="url(#pc2)"><g filter="url(#c1)"><rect x="78" y="88" width="50" height="50" fill="#9ea3ab"/>
<rect x="78" y="88" width="14" height="30" fill="#b9bcc2"/><rect x="112" y="88" width="16" height="34" fill="#858a93"/><path d="M112 94h16M112 101h16M112 108h16M80 96h12M80 104h12" stroke="#d5d8dc" stroke-width="1.2"/>
<path d="M82 138C82 118 90 110 98 108.5L106 108.5C116 110 124 118 124 138Z" fill="#eceef2"/>
<path d="M101.6 110L104.8 110L106 126L103.4 129L101 126Z" fill="#30343c"/>
<ellipse cx="101" cy="101.4" rx="4.9" ry="6.3" fill="#c9a28c"/><path d="M95.6 99C95 93.6 99 92.2 101.6 92.4C105 92.4 107 95 106.4 99.4C105 96.6 102.6 95.8 101 96C98.6 96.2 96.6 97 95.6 99Z" fill="#2b2622"/>
<path d="M100 128l14 -3l4 4l-10 5l-8 -2z" fill="#d8b39c"/>
</g></g>
<circle cx="102.4" cy="113.1" r="22.7" fill="none" stroke="#c9dcf2" stroke-width="0.9"/>
<rect x="50" y="146.4" width="57.8" height="15.5" rx="3" fill="#ffd055"/>
<circle cx="37.4" cy="154" r="23.4" fill="#e8cf9a"/>
<g clip-path="url(#pc3)"><g filter="url(#c1)"><rect x="12" y="128" width="52" height="52" fill="#f6f1e8"/>
<rect x="12" y="128" width="9" height="52" fill="#e2d8c8"/><path d="M47 150l6 -4l2 10l-6 2z" fill="#8aa878"/>
<path d="M29.4 146C28 136 32 132.6 36.4 132.6C41.6 132.6 44 137 43 146C43.6 152 44 158 42 161L30 161C27.6 156 28.6 151 29.4 146Z" fill="#5a3826"/>
<ellipse cx="36.8" cy="142.4" rx="4.6" ry="6.2" fill="#e3b79c"/><path d="M33 140.6h3.2M37.6 140.6h3.2" stroke="#7a2a20" stroke-width="0.9"/><path d="M35.4 146.6h3" stroke="#c23a2a" stroke-width="0.9"/>
<path d="M18 180C18 164 24 154 33 150.6L41 150.6C50 153 57 162 57 180Z" fill="#c0391f"/>
<path d="M33 150.6L37 156L41 150.6Z" fill="#e3b79c"/><path d="M24 172h22v8h-22z" fill="#d9b48a"/><path d="M20 176h30v4h-30z" fill="#b89060"/>
</g></g>
<circle cx="37.4" cy="154" r="23" fill="none" stroke="#e8cf9a" stroke-width="0.9"/>
<text x="63.6" y="154.8" font-family="'Liberation Sans',sans-serif" font-size="6.3" fill="#2a2a2a" stroke="#2a2a2a" stroke-width="0.12" textLength="35.6" lengthAdjust="spacingAndGlyphs">Chiaki Sato</text>
<text x="63.6" y="159" font-family="'Liberation Sans',sans-serif" font-size="2.9" fill="#5a4a20" textLength="17" lengthAdjust="spacingAndGlyphs">as Secretary</text>
<rect x="14" y="183.2" width="16" height="0.9" fill="#b8c4d8" opacity="0.7"/>
<rect x="51" y="182.9" width="38" height="1.1" fill="#9cc0ea"/>
<circle cx="121.3" cy="183.7" r="3.9" fill="none" stroke="#ffffff" stroke-width="0.7"/><circle cx="121.3" cy="183.7" r="2.1" fill="#ffffff"/>
</svg>
</div>
  <div class="tlabel" style="top:476px">Page 5</div>
  <div class="thumb" id="t6" style="top:501.9px;background:#00305f">
<svg viewBox="0 0 140 200" preserveAspectRatio="none" style="display:block">
<defs><filter id="d0"><feGaussianBlur stdDeviation="0.3"/></filter></defs>
<rect width="140" height="200" fill="#00305f"/>
<circle cx="98.5" cy="1.1" r="22.1" fill="#fbd05a"/><circle cx="98.5" cy="1.1" r="17" fill="none" stroke="#fcd768" stroke-width="0.8"/>
<circle cx="146" cy="24" r="15.4" fill="#0b5a9d"/><circle cx="146" cy="24" r="11.5" fill="none" stroke="#4aa3e0" stroke-width="0.5"/>
<circle cx="130.6" cy="5.4" r="12.2" fill="#ffffff"/><circle cx="131" cy="3.4" r="6" fill="#0b5a9d"/>
<circle cx="123.5" cy="25.7" r="6.2" fill="#5ea9e2"/>
<circle cx="143.4" cy="44.3" r="5.2" fill="#fbd05a"/>
<g font-family="'Liberation Sans',sans-serif" font-weight="bold" font-size="8.3" fill="#f5d36a" stroke="#f5d36a" stroke-width="0.3"><text x="17.3" y="33.7" textLength="50.5" lengthAdjust="spacingAndGlyphs">The Review</text><text x="17.3" y="43.6" textLength="30.5" lengthAdjust="spacingAndGlyphs">In Year</text></g>
<g filter="url(#d0)"><g fill="#c5cfdf" opacity="0.6"><rect x="17.3" y="49.8" width="92.5" height="0.9"/><rect x="17.3" y="53.0" width="92.5" height="0.9"/><rect x="17.3" y="56.2" width="92.5" height="0.9"/><rect x="17.3" y="59.5" width="92.5" height="0.9"/><rect x="17.3" y="62.7" width="48.7" height="0.9"/></g></g>
<g fill="#00305f"><rect x="23.5" y="49.4" width="0.9" height="1.6"/><rect x="30.7" y="49.4" width="0.9" height="1.6"/><rect x="36.4" y="49.4" width="0.9" height="1.6"/><rect x="41.0" y="49.4" width="0.9" height="1.6"/><rect x="44.5" y="49.4" width="0.9" height="1.6"/><rect x="51.0" y="49.4" width="0.9" height="1.6"/><rect x="56.6" y="49.4" width="0.9" height="1.6"/><rect x="63.6" y="49.4" width="0.9" height="1.6"/><rect x="68.7" y="49.4" width="0.9" height="1.6"/><rect x="75.7" y="49.4" width="0.9" height="1.6"/><rect x="80.4" y="49.4" width="0.9" height="1.6"/><rect x="87.5" y="49.4" width="0.9" height="1.6"/><rect x="94.3" y="49.4" width="0.9" height="1.6"/><rect x="99.7" y="49.4" width="0.9" height="1.6"/><rect x="105.6" y="49.4" width="0.9" height="1.6"/><rect x="21.1" y="52.6" width="0.9" height="1.6"/><rect x="27.1" y="52.6" width="0.9" height="1.6"/><rect x="34.2" y="52.6" width="0.9" height="1.6"/><rect x="38.9" y="52.6" width="0.9" height="1.6"/><rect x="46.0" y="52.6" width="0.9" height="1.6"/><rect x="52.6" y="52.6" width="0.9" height="1.6"/><rect x="59.9" y="52.6" width="0.9" height="1.6"/><rect x="64.9" y="52.6" width="0.9" height="1.6"/><rect x="68.8" y="52.6" width="0.9" height="1.6"/><rect x="75.9" y="52.6" width="0.9" height="1.6"/><rect x="83.0" y="52.6" width="0.9" height="1.6"/><rect x="88.5" y="52.6" width="0.9" height="1.6"/><rect x="92.5" y="52.6" width="0.9" height="1.6"/><rect x="96.8" y="52.6" width="0.9" height="1.6"/><rect x="103.2" y="52.6" width="0.9" height="1.6"/><rect x="24.1" y="55.9" width="0.9" height="1.6"/><rect x="30.3" y="55.9" width="0.9" height="1.6"/><rect x="34.7" y="55.9" width="0.9" height="1.6"/><rect x="41.1" y="55.9" width="0.9" height="1.6"/><rect x="46.2" y="55.9" width="0.9" height="1.6"/><rect x="53.9" y="55.9" width="0.9" height="1.6"/><rect x="61.5" y="55.9" width="0.9" height="1.6"/><rect x="67.3" y="55.9" width="0.9" height="1.6"/><rect x="73.7" y="55.9" width="0.9" height="1.6"/><rect x="80.4" y="55.9" width="0.9" height="1.6"/><rect x="87.5" y="55.9" width="0.9" height="1.6"/><rect x="95.4" y="55.9" width="0.9" height="1.6"/><rect x="99.0" y="55.9" width="0.9" height="1.6"/><rect x="104.1" y="55.9" width="0.9" height="1.6"/><rect x="21.5" y="59.1" width="0.9" height="1.6"/><rect x="27.7" y="59.1" width="0.9" height="1.6"/><rect x="31.6" y="59.1" width="0.9" height="1.6"/><rect x="39.0" y="59.1" width="0.9" height="1.6"/><rect x="44.9" y="59.1" width="0.9" height="1.6"/><rect x="48.9" y="59.1" width="0.9" height="1.6"/><rect x="55.4" y="59.1" width="0.9" height="1.6"/><rect x="60.3" y="59.1" width="0.9" height="1.6"/><rect x="64.7" y="59.1" width="0.9" height="1.6"/><rect x="70.4" y="59.1" width="0.9" height="1.6"/><rect x="74.5" y="59.1" width="0.9" height="1.6"/><rect x="78.9" y="59.1" width="0.9" height="1.6"/><rect x="86.3" y="59.1" width="0.9" height="1.6"/><rect x="93.0" y="59.1" width="0.9" height="1.6"/><rect x="96.5" y="59.1" width="0.9" height="1.6"/><rect x="103.5" y="59.1" width="0.9" height="1.6"/><rect x="107.1" y="59.1" width="0.9" height="1.6"/><rect x="23.9" y="62.4" width="0.9" height="1.6"/><rect x="30.2" y="62.4" width="0.9" height="1.6"/><rect x="35.1" y="62.4" width="0.9" height="1.6"/><rect x="40.3" y="62.4" width="0.9" height="1.6"/><rect x="45.5" y="62.4" width="0.9" height="1.6"/><rect x="49.6" y="62.4" width="0.9" height="1.6"/><rect x="57.6" y="62.4" width="0.9" height="1.6"/><rect x="61.3" y="62.4" width="0.9" height="1.6"/></g>
<path d="M41.0 93.7L41.0 74.7A19.0 19.0 0 0 1 57.8 84.8Z" fill="#0b5a9d"/><path d="M41.0 93.7L57.8 84.8A19.0 19.0 0 0 1 59.7 97.0Z" fill="#6d7fc0"/><path d="M41.0 93.7L59.7 97.0A19.0 19.0 0 0 1 26.9 106.4Z" fill="#a79bd8"/><path d="M41.0 93.7L26.9 106.4A19.0 19.0 0 0 1 30.1 78.1Z" fill="#cbb9e8"/><path d="M41.0 93.7L30.1 78.1A19.0 19.0 0 0 1 41.0 74.7Z" fill="#f6e2fd"/><rect x="33.8" y="92.0" width="14.4" height="4.2" rx="2" fill="#f5d36a"/><rect x="37.8" y="93.4" width="6.4" height="1.5" fill="#8a6a18" opacity="0.8"/>
<path d="M101.0 93.7L101.0 74.7A19.0 19.0 0 0 1 117.5 84.2Z" fill="#0b5a9d"/><path d="M101.0 93.7L117.5 84.2A19.0 19.0 0 0 1 103.6 112.5Z" fill="#6d7fc0"/><path d="M101.0 93.7L103.6 112.5A19.0 19.0 0 0 1 84.1 102.3Z" fill="#a79bd8"/><path d="M101.0 93.7L84.1 102.3A19.0 19.0 0 0 1 88.3 79.6Z" fill="#cbb9e8"/><path d="M101.0 93.7L88.3 79.6A19.0 19.0 0 0 1 101.0 74.7Z" fill="#f6e2fd"/><rect x="93.8" y="92.0" width="14.4" height="4.2" rx="2" fill="#f5d36a"/><rect x="97.8" y="93.4" width="6.4" height="1.5" fill="#8a6a18" opacity="0.8"/>
<path d="M40.8 150.0L40.8 130.7A19.3 19.3 0 0 1 46.8 131.6Z" fill="#0b5a9d"/><path d="M40.8 150.0L46.8 131.6A19.3 19.3 0 0 1 57.2 139.8Z" fill="#6d7fc0"/><path d="M40.8 150.0L57.2 139.8A19.3 19.3 0 0 1 54.4 163.6Z" fill="#a79bd8"/><path d="M40.8 150.0L54.4 163.6A19.3 19.3 0 0 1 27.9 164.3Z" fill="#cbb9e8"/><path d="M40.8 150.0L27.9 164.3A19.3 19.3 0 0 1 40.8 130.7Z" fill="#f6e2fd"/><rect x="33.6" y="148.3" width="14.4" height="4.2" rx="2" fill="#f5d36a"/><rect x="37.6" y="149.7" width="6.4" height="1.5" fill="#8a6a18" opacity="0.8"/>
<path d="M99.9 149.0L99.9 130.0A19.0 19.0 0 0 1 110.8 133.4Z" fill="#0b5a9d"/><path d="M99.9 149.0L110.8 133.4A19.0 19.0 0 0 1 117.1 157.0Z" fill="#6d7fc0"/><path d="M99.9 149.0L117.1 157.0A19.0 19.0 0 0 1 89.0 164.6Z" fill="#a79bd8"/><path d="M99.9 149.0L89.0 164.6A19.0 19.0 0 0 1 82.0 155.5Z" fill="#cbb9e8"/><path d="M99.9 149.0L82.0 155.5A19.0 19.0 0 0 1 99.9 130.0Z" fill="#f6e2fd"/><rect x="92.7" y="147.3" width="14.4" height="4.2" rx="2" fill="#f5d36a"/><rect x="96.7" y="148.7" width="6.4" height="1.5" fill="#8a6a18" opacity="0.8"/>
<g fill="#c5cfdf" opacity="0.6"><rect x="32" y="72" width="4" height="0.8"/><rect x="50" y="74" width="3" height="0.8"/><rect x="61" y="88" width="3.6" height="0.8"/><rect x="17" y="90.6" width="3.6" height="0.8"/><rect x="44" y="114.4" width="4" height="0.8"/><rect x="90" y="72" width="4" height="0.8"/><rect x="111" y="74" width="3.6" height="0.8"/><rect x="77" y="89" width="3.6" height="0.8"/><rect x="119" y="104" width="4" height="0.8"/><rect x="89" y="113" width="4" height="0.8"/><rect x="42" y="128.6" width="4" height="0.8"/><rect x="52" y="132.4" width="4" height="0.8"/><rect x="18" y="141.6" width="3.6" height="0.8"/><rect x="61" y="151.4" width="3.6" height="0.8"/><rect x="40" y="171.6" width="3.6" height="0.8"/><rect x="105" y="128" width="4" height="0.8"/><rect x="79.6" y="135.6" width="4" height="0.8"/><rect x="119" y="143.6" width="4" height="0.8"/><rect x="80" y="162.6" width="4" height="0.8"/><rect x="104" y="170.6" width="4" height="0.8"/></g>
</svg>
</div>
  <div id="sscroll"></div>
</div>
<div id="main">
  <div id="page"><div id="yellow"></div><div class="abs" style="left:-0.5px;top:0;width:761px;height:680px">
<svg class="abs" style="left:0;top:0" width="761" height="680" viewBox="0 0 761 680">
<g fill="#000000" stroke="#000000" stroke-width="0.5" stroke-linejoin="round">
<polygon points="78.4,217.0 89.0,212.2 99.0,208.5 94.7,204.7 96.6,200.3 104.0,197.8 104.0,194.0 111.6,192.2 115.4,188.4 126.7,184.9 135.5,183.4 144.3,185.2 155.6,186.5 164.3,186.1 174.4,185.2 179.0,186.1 188.3,188.0 197.7,188.9 207.0,188.9 214.5,187.0 221.0,184.2 225.7,182.4 227.6,186.1 226.7,189.8 222.9,193.6 218.3,196.4 211.7,200.1 206.1,203.9 203.8,207.6 205.2,211.3 210.8,214.1 215.4,216.0 216.4,219.7 217.3,223.5 220.1,219.7 222.0,216.9 227.6,214.1 230.4,209.5 232.3,204.8 235.1,201.5 240.7,200.6 244.4,202.9 246.3,206.7 249.1,207.6 252.8,205.3 254.7,209.5 256.6,214.1 258.4,218.8 257.5,222.6 250.7,225.3 240.7,227.8 234.0,230.3 232.3,232.8 240.7,232.0 246.5,233.7 242.3,237.0 235.7,239.5 230.7,238.7 226.5,242.0 223.2,245.3 217.3,249.5 212.3,253.7 209.8,258.7 205.7,262.0 200.7,267.0 198.2,270.3 195.7,273.7 197.0,278.7 195.7,282.0 192.3,275.3 190.7,271.2 182.3,270.3 175.7,272.0 169.8,274.5 165.7,277.8 163.2,282.8 161.5,288.7 163.2,294.5 168.2,297.0 174.0,295.3 176.5,291.2 181.5,291.2 180.7,297.0 179.0,302.0 184.0,304.5 187.3,307.0 186.5,312.0 187.3,317.0 192.3,318.7 197.3,317.8 199.0,319.0 195.0,323.0 191.5,322.8 187.3,320.3 183.2,317.0 179.0,312.0 174.0,307.0 167.3,303.7 160.7,301.2 154.0,298.7 147.3,293.7 144.8,288.7 142.0,283.5 139.8,278.0 137.6,272.0 136.0,267.4 134.5,267.2 136.0,272.5 138.0,278.5 140.0,284.0 139.8,286.4 138.0,285.0 135.4,278.5 133.0,272.0 131.4,267.5 126.5,260.3 124.8,252.0 126.5,243.7 131.5,236.0 135.5,231.0 134.2,227.3 136.1,222.3 134.2,216.0 133.0,209.7 130.5,204.7 121.7,204.1 111.6,205.3 102.9,209.1 92.8,213.5"/>
<polygon points="195.0,320.0 199.8,317.0 204.0,313.7 209.8,312.0 217.3,313.7 224.0,314.5 230.7,317.8 237.3,322.0 244.0,325.3 249.0,328.7 252.3,335.3 257.3,340.3 264.0,343.7 272.3,346.2 279.0,350.3 282.3,356.2 279.0,363.7 274.8,372.0 274.0,382.0 269.0,388.7 260.7,393.7 257.3,398.7 255.7,405.3 252.3,412.0 249.0,417.8 244.0,417.0 246.5,422.8 244.5,425.4 238.9,426.3 237.9,430.1 234.2,432.9 236.5,437.6 234.7,443.2 236.5,447.8 235.1,453.4 238.9,458.1 244.0,461.9 241.7,463.3 233.3,460.5 226.7,455.3 222.0,447.8 220.2,439.4 218.3,432.0 216.4,424.5 216.5,407.0 215.7,393.7 214.0,380.3 207.3,374.5 199.8,367.0 194.0,357.0 189.8,347.0 192.3,335.3 195.0,327.0"/>
<polygon points="266.5,172.0 279.0,167.0 300.7,164.5 325.7,163.3 341.5,166.2 334.0,168.7 331.5,173.7 330.7,178.7 325.7,183.7 315.7,187.8 305.7,192.0 297.3,196.2 290.7,202.0 284.8,205.3 279.8,202.8 277.3,197.0 278.2,189.5 281.5,183.7 280.7,178.7 277.3,174.5 270.7,173.3"/>
<polygon points="319.8,195.0 324.0,193.0 331.0,193.0 334.8,195.0 332.0,198.0 325.0,198.5 321.0,197.5"/>
<polygon points="239.7,168.3 246.3,166.0 258.4,164.8 272.5,164.1 282.3,164.0 272.5,166.5 263.1,169.3 253.8,172.1 246.3,172.1 241.6,170.7"/>
<polygon points="197.7,173.5 203.3,171.6 207.0,172.6 209.8,174.4 215.4,174.0 216.4,175.8 211.7,176.3 206.1,176.3 201.4,175.4"/>
<polygon points="232.3,173.0 238.8,174.0 244.4,174.4 250.0,175.4 248.2,176.8 240.7,176.3 235.1,175.4"/>
<polygon points="216.4,180.0 222.0,178.2 223.9,180.0 219.2,181.9"/>
<polygon points="182.7,181.9 187.4,179.1 191.1,177.2 197.7,177.7 202.4,180.5 207.0,181.0 209.8,180.0 210.8,183.3 208.9,186.6 202.4,186.6 197.7,187.0 192.1,187.5 189.3,184.7 191.1,181.0 186.5,182.4"/>
<polygon points="231.3,182.4 235.1,180.0 242.6,179.6 250.0,180.0 255.6,182.8 259.4,186.6 264.0,191.2 260.3,194.0 256.6,193.1 255.6,196.4 251.9,200.1 247.2,199.2 244.4,195.9 246.3,192.6 249.1,189.8 244.4,187.0 239.7,186.1 236.9,188.0 235.1,190.8 231.3,191.7 228.5,190.8 233.2,187.0 234.1,184.2"/>
<polygon points="223.9,196.4 227.6,194.0 231.3,196.9 227.6,197.8"/>
<polygon points="249.8,229.5 255.7,225.3 259.8,228.7 259.8,232.8 254.0,232.8"/>
<polygon points="187.3,288.7 194.0,287.3 200.7,289.5 205.7,292.8 202.3,293.7 195.7,291.2 189.0,290.3"/>
<polygon points="206.5,295.3 214.0,294.5 214.8,297.8 208.2,298.3"/>
<polygon points="336.8,218.9 339.6,216.1 343.3,215.7 344.3,218.9 341.9,221.7 338.2,222.2"/>
<polygon points="348.0,207.7 350.8,208.2 350.4,211.9 352.7,215.2 355.0,218.9 356.9,221.7 354.6,223.6 349.0,224.5 345.2,225.5 348.0,222.2 346.1,219.9 348.0,217.5 345.7,214.3 344.7,210.5"/>
<polygon points="224.8,174.0 228.5,173.0 230.4,175.4 226.7,176.3"/>
<polygon points="214.0,171.3 217.8,169.3 218.2,170.3 215.0,172.0"/>
<polygon points="225.7,168.8 231.3,170.2 231.0,171.3 225.5,170.0"/>
<polygon points="234.1,169.0 236.9,170.6 236.2,171.8 233.6,170.2"/>
<polygon points="227.6,178.1 231.3,178.6 231.3,179.8 227.6,179.3"/>
<polygon points="242.6,188.6 244.5,188.6 244.5,190.3 242.6,190.3"/>
<polygon points="238.5,194.4 241.0,194.4 241.0,196.4 238.5,196.4"/>
<polygon points="363.4,202.6 364.8,199.3 368.6,197.9 372.3,197.4 374.2,193.7 377.9,189.0 383.5,185.7 390.1,184.3 398.5,183.9 405.0,185.3 411.6,187.6 417.2,189.5 418.1,192.8 420.9,190.0 423.7,188.6 427.5,190.0 433.1,188.1 442.3,185.3 449.0,187.0 453.2,183.7 459.0,179.5 462.3,185.3 465.7,190.3 469.0,183.7 475.7,177.0 484.0,174.5 492.3,172.0 502.3,173.7 507.3,174.5 509.0,177.8 519.0,178.7 532.3,179.5 549.0,180.3 565.7,182.8 582.3,185.3 602.3,186.2 615.7,187.8 632.3,191.2 640.7,193.7 640.7,196.2 632.3,196.2 630.7,199.5 625.7,201.2 622.3,203.7 616.5,204.6 621.8,207.8 624.6,214.5 624.6,224.2 619.6,221.2 614.5,216.2 610.6,210.5 610.0,205.3 609.8,201.2 605.7,202.0 602.3,205.3 592.3,206.2 584.0,207.8 581.5,212.0 580.7,215.3 587.3,217.8 594.0,222.0 598.2,228.7 597.3,235.3 594.0,242.0 589.8,244.5 589.0,250.3 592.3,253.7 594.8,257.8 591.5,261.2 587.3,255.3 584.8,251.2 580.7,252.8 575.7,249.5 571.5,252.0 577.3,256.2 580.7,260.3 584.0,267.0 585.7,273.7 582.3,282.0 577.3,287.0 570.7,290.3 564.0,292.0 559.0,295.3 560.7,302.0 565.7,308.7 566.5,314.5 559.0,318.7 554.5,313.7 553.0,309.5 552.0,313.7 555.5,321.5 559.0,328.5 560.5,335.6 558.5,336.0 555.2,329.8 550.8,323.2 546.8,317.0 546.5,308.7 542.3,302.8 537.3,297.8 532.3,290.3 525.7,289.5 520.5,293.7 515.5,300.3 512.0,307.0 510.5,315.0 505.5,320.0 501.5,312.0 498.2,303.7 494.8,295.3 492.3,289.5 487.3,287.0 484.0,282.8 475.7,282.0 467.3,281.2 462.0,280.5 464.0,284.5 467.3,289.5 464.0,295.3 459.0,300.3 450.7,304.5 442.3,307.8 439.0,309.5 438.2,312.8 442.3,313.7 452.3,312.8 450.7,320.3 445.7,330.3 439.0,338.7 434.0,345.3 430.7,353.7 429.8,363.7 431.5,367.0 430.7,374.5 425.7,378.7 419.8,384.5 420.7,390.3 419.0,395.3 414.8,398.7 410.7,407.0 404.0,413.7 395.7,416.2 388.2,417.0 384.8,405.3 380.7,395.3 376.5,383.7 374.8,373.7 378.2,365.3 377.3,357.0 375.7,353.7 372.3,347.0 369.8,340.3 369.0,332.0 365.7,328.7 360.7,326.2 354.0,325.3 345.7,327.0 337.3,328.7 331.5,324.5 325.7,318.7 321.5,312.0 318.2,305.3 319.0,298.7 319.8,290.3 323.2,282.0 329.0,273.7 335.7,265.3 341.0,260.0 341.5,254.5 335.9,252.0 336.8,248.0 337.7,241.4 345.2,240.4 351.3,239.5 350.8,234.8 348.0,232.0 345.7,230.1 349.0,229.2 352.7,226.9 356.4,224.5 359.2,222.7 362.0,219.9 365.8,218.0 367.6,215.2 368.6,211.4 370.4,210.0 370.4,207.7 366.2,209.1 363.9,206.8"/>
<polygon points="449.8,367.0 451.5,372.0 448.2,380.3 445.7,388.7 442.3,395.3 438.2,397.0 435.7,392.8 437.3,385.3 439.0,378.7 443.2,374.5 447.3,369.5"/>
<polygon points="511.0,319.0 514.2,319.8 514.6,323.0 512.5,325.4 510.6,322.4"/>
<polygon points="564.5,294.0 567.5,293.5 568.0,296.5 565.0,297.0"/>
<polygon points="586.5,283.0 588.5,283.5 588.0,288.0 586.0,287.5"/>
<polygon points="589.0,297.0 592.3,300.3 591.5,306.2 595.7,310.3 599.0,314.5 599.8,320.3 596.5,322.0 594.0,317.0 592.3,311.2 589.0,306.2 587.7,300.3"/>
<polygon points="569.0,337.0 575.7,331.2 584.8,323.7 588.2,327.8 586.5,335.3 582.3,342.0 579.8,347.8 574.0,347.0 570.7,342.8"/>
<polygon points="541.0,327.2 547.6,328.4 554.8,335.4 559.2,340.6 562.4,346.6 562.6,351.8 556.8,349.6 551.6,342.8 546.4,336.0"/>
<polygon points="562.3,352.0 570.7,353.7 582.3,356.2 592.3,358.3 602.3,357.8 599.0,361.2 589.0,360.3 577.3,358.3 565.7,355.3"/>
<polygon points="613.2,341.2 617.3,342.8 620.7,346.2 625.7,342.8 634.0,345.3 640.7,350.3 644.8,355.3 649.0,362.0 644.0,358.7 639.0,355.3 635.7,358.7 629.8,357.8 625.7,353.7 620.7,350.3 615.7,347.0"/>
<polygon points="574.0,390.3 580.7,385.3 589.0,382.0 594.0,377.0 600.7,372.0 607.3,369.5 612.3,365.3 616.5,364.5 621.5,367.0 619.8,371.2 625.7,377.8 629.8,373.7 632.3,365.3 635.7,371.2 639.0,378.7 643.2,386.2 647.3,394.5 646.5,403.7 642.3,412.0 637.3,418.7 630.7,423.7 624.0,427.0 617.3,425.3 613.2,421.2 612.3,415.3 607.3,416.2 602.3,410.3 594.0,410.3 585.7,412.8 577.3,416.2 570.7,417.8 569.0,415.3 572.3,408.7 571.5,400.3 572.3,393.7"/>
<polygon points="616.0,431.6 623.8,430.8 622.0,435.8 617.4,438.0"/>
<polygon points="678.0,417.4 680.2,422.6 683.6,424.4 679.4,428.2 674.0,430.8 672.0,429.0 675.2,426.0 676.8,422.0"/>
<polygon points="673.6,430.0 668.6,433.4 662.8,437.6 656.2,441.8 651.0,445.2 649.4,444.0 649.4,442.2 655.2,438.0 661.8,433.8 668.6,429.6 672.0,428.6"/>
</g>
<g fill="#ffd055">
<polygon points="340.9,258.3 344.0,257.0 349.6,254.5 354.0,250.8 357.8,243.9 362.8,241.4 369.0,239.5 372.1,242.0 375.3,244.5 379.0,249.5 382.8,254.5 389.0,258.0 399.0,258.9 406.5,255.8 410.3,257.6 416.5,257.0 419.0,258.9 418.4,263.3 416.5,267.0 409.0,268.9 404.0,267.6 396.5,265.1 391.5,264.5 387.8,269.5 384.0,267.6 379.0,265.8 375.3,263.9 372.1,260.1 371.5,257.0 366.5,256.4 360.3,257.0 354.0,257.6 347.8,258.9 342.8,260.1"/>
<polygon points="375.2,236.4 376.6,236.2 377.8,239.2 381.0,242.2 380.0,243.2 376.5,240.0"/>
<polygon points="403.6,241.8 407.8,235.7 412.5,234.8 416.2,236.7 420.9,233.4 422.8,234.8 419.0,238.6 423.7,240.4 428.4,244.2 425.6,247.0 416.5,245.5 409.0,246.6 405.0,246.2"/>
<polygon points="438.4,238.3 441.5,234.5 445.9,233.9 446.5,237.0 444.6,240.8 447.8,244.5 450.9,248.3 452.1,253.3 449.0,255.1 445.3,253.9 443.4,249.5 442.8,244.5 439.6,241.4"/>
<polygon points="416.0,275.5 419.0,275.5 422.5,280.5 426.5,288.0 431.5,296.5 436.3,304.0 440.0,310.0 438.0,313.0 435.5,311.5 432.0,306.5 427.0,299.0 422.0,290.3 418.2,282.5"/>
<polygon points="443.5,271.6 447.5,270.8 451.0,276.5 454.5,278.8 459.0,277.6 462.5,280.0 461.8,281.6 457.5,283.6 453.0,284.5 450.0,281.0 446.6,276.8"/>
<polygon points="393.8,193.7 392.4,196.5 390.1,199.3 389.1,202.1 390.1,204.4 394.7,205.4 400.8,204.9 399.4,206.3 394.7,207.2 391.9,208.2 393.3,211.0 391.0,211.9 389.1,214.3 386.3,216.1 380.7,217.5 376.1,217.5 373.3,216.6 371.5,215.0 376.1,213.8 379.8,214.3 382.6,212.4 384.5,209.1 385.4,205.8 383.5,203.0 384.5,200.2 387.3,197.4 391.0,195.1"/>
<polygon points="415.3,192.3 410.6,192.3 407.8,193.2 411.6,196.5 415.3,195.1 418.1,192.8"/>
<polygon points="370.9,210.5 372.4,208.4 373.8,210.5 374.8,214.0 372.8,215.8 371.3,213.0"/>
<polygon points="367.8,210.4 370.2,209.0 372.4,208.4 372.8,209.2 370.6,210.0 368.4,211.4"/>
</g>
<g stroke="#000" stroke-width="2" fill="none" stroke-linecap="round"><path d="M590.3 338.7L590.3 350.3M590.7 341L599 336.5M591.5 344.5L596.5 350.3"/></g>
<defs><clipPath id="land"><polygon points="78.4,217.0 89.0,212.2 99.0,208.5 94.7,204.7 96.6,200.3 104.0,197.8 104.0,194.0 111.6,192.2 115.4,188.4 126.7,184.9 135.5,183.4 144.3,185.2 155.6,186.5 164.3,186.1 174.4,185.2 179.0,186.1 188.3,188.0 197.7,188.9 207.0,188.9 214.5,187.0 221.0,184.2 225.7,182.4 227.6,186.1 226.7,189.8 222.9,193.6 218.3,196.4 211.7,200.1 206.1,203.9 203.8,207.6 205.2,211.3 210.8,214.1 215.4,216.0 216.4,219.7 217.3,223.5 220.1,219.7 222.0,216.9 227.6,214.1 230.4,209.5 232.3,204.8 235.1,201.5 240.7,200.6 244.4,202.9 246.3,206.7 249.1,207.6 252.8,205.3 254.7,209.5 256.6,214.1 258.4,218.8 257.5,222.6 250.7,225.3 240.7,227.8 234.0,230.3 232.3,232.8 240.7,232.0 246.5,233.7 242.3,237.0 235.7,239.5 230.7,238.7 226.5,242.0 223.2,245.3 217.3,249.5 212.3,253.7 209.8,258.7 205.7,262.0 200.7,267.0 198.2,270.3 195.7,273.7 197.0,278.7 195.7,282.0 192.3,275.3 190.7,271.2 182.3,270.3 175.7,272.0 169.8,274.5 165.7,277.8 163.2,282.8 161.5,288.7 163.2,294.5 168.2,297.0 174.0,295.3 176.5,291.2 181.5,291.2 180.7,297.0 179.0,302.0 184.0,304.5 187.3,307.0 186.5,312.0 187.3,317.0 192.3,318.7 197.3,317.8 199.0,319.0 195.0,323.0 191.5,322.8 187.3,320.3 183.2,317.0 179.0,312.0 174.0,307.0 167.3,303.7 160.7,301.2 154.0,298.7 147.3,293.7 144.8,288.7 142.0,283.5 139.8,278.0 137.6,272.0 136.0,267.4 134.5,267.2 136.0,272.5 138.0,278.5 140.0,284.0 139.8,286.4 138.0,285.0 135.4,278.5 133.0,272.0 131.4,267.5 126.5,260.3 124.8,252.0 126.5,243.7 131.5,236.0 135.5,231.0 134.2,227.3 136.1,222.3 134.2,216.0 133.0,209.7 130.5,204.7 121.7,204.1 111.6,205.3 102.9,209.1 92.8,213.5"/><polygon points="195.0,320.0 199.8,317.0 204.0,313.7 209.8,312.0 217.3,313.7 224.0,314.5 230.7,317.8 237.3,322.0 244.0,325.3 249.0,328.7 252.3,335.3 257.3,340.3 264.0,343.7 272.3,346.2 279.0,350.3 282.3,356.2 279.0,363.7 274.8,372.0 274.0,382.0 269.0,388.7 260.7,393.7 257.3,398.7 255.7,405.3 252.3,412.0 249.0,417.8 244.0,417.0 246.5,422.8 244.5,425.4 238.9,426.3 237.9,430.1 234.2,432.9 236.5,437.6 234.7,443.2 236.5,447.8 235.1,453.4 238.9,458.1 244.0,461.9 241.7,463.3 233.3,460.5 226.7,455.3 222.0,447.8 220.2,439.4 218.3,432.0 216.4,424.5 216.5,407.0 215.7,393.7 214.0,380.3 207.3,374.5 199.8,367.0 194.0,357.0 189.8,347.0 192.3,335.3 195.0,327.0"/><polygon points="266.5,172.0 279.0,167.0 300.7,164.5 325.7,163.3 341.5,166.2 334.0,168.7 331.5,173.7 330.7,178.7 325.7,183.7 315.7,187.8 305.7,192.0 297.3,196.2 290.7,202.0 284.8,205.3 279.8,202.8 277.3,197.0 278.2,189.5 281.5,183.7 280.7,178.7 277.3,174.5 270.7,173.3"/><polygon points="319.8,195.0 324.0,193.0 331.0,193.0 334.8,195.0 332.0,198.0 325.0,198.5 321.0,197.5"/><polygon points="239.7,168.3 246.3,166.0 258.4,164.8 272.5,164.1 282.3,164.0 272.5,166.5 263.1,169.3 253.8,172.1 246.3,172.1 241.6,170.7"/><polygon points="197.7,173.5 203.3,171.6 207.0,172.6 209.8,174.4 215.4,174.0 216.4,175.8 211.7,176.3 206.1,176.3 201.4,175.4"/><polygon points="232.3,173.0 238.8,174.0 244.4,174.4 250.0,175.4 248.2,176.8 240.7,176.3 235.1,175.4"/><polygon points="216.4,180.0 222.0,178.2 223.9,180.0 219.2,181.9"/><polygon points="182.7,181.9 187.4,179.1 191.1,177.2 197.7,177.7 202.4,180.5 207.0,181.0 209.8,180.0 210.8,183.3 208.9,186.6 202.4,186.6 197.7,187.0 192.1,187.5 189.3,184.7 191.1,181.0 186.5,182.4"/><polygon points="231.3,182.4 235.1,180.0 242.6,179.6 250.0,180.0 255.6,182.8 259.4,186.6 264.0,191.2 260.3,194.0 256.6,193.1 255.6,196.4 251.9,200.1 247.2,199.2 244.4,195.9 246.3,192.6 249.1,189.8 244.4,187.0 239.7,186.1 236.9,188.0 235.1,190.8 231.3,191.7 228.5,190.8 233.2,187.0 234.1,184.2"/><polygon points="223.9,196.4 227.6,194.0 231.3,196.9 227.6,197.8"/><polygon points="249.8,229.5 255.7,225.3 259.8,228.7 259.8,232.8 254.0,232.8"/><polygon points="187.3,288.7 194.0,287.3 200.7,289.5 205.7,292.8 202.3,293.7 195.7,291.2 189.0,290.3"/><polygon points="206.5,295.3 214.0,294.5 214.8,297.8 208.2,298.3"/><polygon points="336.8,218.9 339.6,216.1 343.3,215.7 344.3,218.9 341.9,221.7 338.2,222.2"/><polygon points="348.0,207.7 350.8,208.2 350.4,211.9 352.7,215.2 355.0,218.9 356.9,221.7 354.6,223.6 349.0,224.5 345.2,225.5 348.0,222.2 346.1,219.9 348.0,217.5 345.7,214.3 344.7,210.5"/><polygon points="224.8,174.0 228.5,173.0 230.4,175.4 226.7,176.3"/><polygon points="214.0,171.3 217.8,169.3 218.2,170.3 215.0,172.0"/><polygon points="225.7,168.8 231.3,170.2 231.0,171.3 225.5,170.0"/><polygon points="234.1,169.0 236.9,170.6 236.2,171.8 233.6,170.2"/><polygon points="227.6,178.1 231.3,178.6 231.3,179.8 227.6,179.3"/><polygon points="242.6,188.6 244.5,188.6 244.5,190.3 242.6,190.3"/><polygon points="238.5,194.4 241.0,194.4 241.0,196.4 238.5,196.4"/><polygon points="363.4,202.6 364.8,199.3 368.6,197.9 372.3,197.4 374.2,193.7 377.9,189.0 383.5,185.7 390.1,184.3 398.5,183.9 405.0,185.3 411.6,187.6 417.2,189.5 418.1,192.8 420.9,190.0 423.7,188.6 427.5,190.0 433.1,188.1 442.3,185.3 449.0,187.0 453.2,183.7 459.0,179.5 462.3,185.3 465.7,190.3 469.0,183.7 475.7,177.0 484.0,174.5 492.3,172.0 502.3,173.7 507.3,174.5 509.0,177.8 519.0,178.7 532.3,179.5 549.0,180.3 565.7,182.8 582.3,185.3 602.3,186.2 615.7,187.8 632.3,191.2 640.7,193.7 640.7,196.2 632.3,196.2 630.7,199.5 625.7,201.2 622.3,203.7 616.5,204.6 621.8,207.8 624.6,214.5 624.6,224.2 619.6,221.2 614.5,216.2 610.6,210.5 610.0,205.3 609.8,201.2 605.7,202.0 602.3,205.3 592.3,206.2 584.0,207.8 581.5,212.0 580.7,215.3 587.3,217.8 594.0,222.0 598.2,228.7 597.3,235.3 594.0,242.0 589.8,244.5 589.0,250.3 592.3,253.7 594.8,257.8 591.5,261.2 587.3,255.3 584.8,251.2 580.7,252.8 575.7,249.5 571.5,252.0 577.3,256.2 580.7,260.3 584.0,267.0 585.7,273.7 582.3,282.0 577.3,287.0 570.7,290.3 564.0,292.0 559.0,295.3 560.7,302.0 565.7,308.7 566.5,314.5 559.0,318.7 554.5,313.7 553.0,309.5 552.0,313.7 555.5,321.5 559.0,328.5 560.5,335.6 558.5,336.0 555.2,329.8 550.8,323.2 546.8,317.0 546.5,308.7 542.3,302.8 537.3,297.8 532.3,290.3 525.7,289.5 520.5,293.7 515.5,300.3 512.0,307.0 510.5,315.0 505.5,320.0 501.5,312.0 498.2,303.7 494.8,295.3 492.3,289.5 487.3,287.0 484.0,282.8 475.7,282.0 467.3,281.2 462.0,280.5 464.0,284.5 467.3,289.5 464.0,295.3 459.0,300.3 450.7,304.5 442.3,307.8 439.0,309.5 438.2,312.8 442.3,313.7 452.3,312.8 450.7,320.3 445.7,330.3 439.0,338.7 434.0,345.3 430.7,353.7 429.8,363.7 431.5,367.0 430.7,374.5 425.7,378.7 419.8,384.5 420.7,390.3 419.0,395.3 414.8,398.7 410.7,407.0 404.0,413.7 395.7,416.2 388.2,417.0 384.8,405.3 380.7,395.3 376.5,383.7 374.8,373.7 378.2,365.3 377.3,357.0 375.7,353.7 372.3,347.0 369.8,340.3 369.0,332.0 365.7,328.7 360.7,326.2 354.0,325.3 345.7,327.0 337.3,328.7 331.5,324.5 325.7,318.7 321.5,312.0 318.2,305.3 319.0,298.7 319.8,290.3 323.2,282.0 329.0,273.7 335.7,265.3 341.0,260.0 341.5,254.5 335.9,252.0 336.8,248.0 337.7,241.4 345.2,240.4 351.3,239.5 350.8,234.8 348.0,232.0 345.7,230.1 349.0,229.2 352.7,226.9 356.4,224.5 359.2,222.7 362.0,219.9 365.8,218.0 367.6,215.2 368.6,211.4 370.4,210.0 370.4,207.7 366.2,209.1 363.9,206.8"/><polygon points="449.8,367.0 451.5,372.0 448.2,380.3 445.7,388.7 442.3,395.3 438.2,397.0 435.7,392.8 437.3,385.3 439.0,378.7 443.2,374.5 447.3,369.5"/><polygon points="511.0,319.0 514.2,319.8 514.6,323.0 512.5,325.4 510.6,322.4"/><polygon points="564.5,294.0 567.5,293.5 568.0,296.5 565.0,297.0"/><polygon points="586.5,283.0 588.5,283.5 588.0,288.0 586.0,287.5"/><polygon points="589.0,297.0 592.3,300.3 591.5,306.2 595.7,310.3 599.0,314.5 599.8,320.3 596.5,322.0 594.0,317.0 592.3,311.2 589.0,306.2 587.7,300.3"/><polygon points="569.0,337.0 575.7,331.2 584.8,323.7 588.2,327.8 586.5,335.3 582.3,342.0 579.8,347.8 574.0,347.0 570.7,342.8"/><polygon points="541.0,327.2 547.6,328.4 554.8,335.4 559.2,340.6 562.4,346.6 562.6,351.8 556.8,349.6 551.6,342.8 546.4,336.0"/><polygon points="562.3,352.0 570.7,353.7 582.3,356.2 592.3,358.3 602.3,357.8 599.0,361.2 589.0,360.3 577.3,358.3 565.7,355.3"/><polygon points="613.2,341.2 617.3,342.8 620.7,346.2 625.7,342.8 634.0,345.3 640.7,350.3 644.8,355.3 649.0,362.0 644.0,358.7 639.0,355.3 635.7,358.7 629.8,357.8 625.7,353.7 620.7,350.3 615.7,347.0"/><polygon points="574.0,390.3 580.7,385.3 589.0,382.0 594.0,377.0 600.7,372.0 607.3,369.5 612.3,365.3 616.5,364.5 621.5,367.0 619.8,371.2 625.7,377.8 629.8,373.7 632.3,365.3 635.7,371.2 639.0,378.7 643.2,386.2 647.3,394.5 646.5,403.7 642.3,412.0 637.3,418.7 630.7,423.7 624.0,427.0 617.3,425.3 613.2,421.2 612.3,415.3 607.3,416.2 602.3,410.3 594.0,410.3 585.7,412.8 577.3,416.2 570.7,417.8 569.0,415.3 572.3,408.7 571.5,400.3 572.3,393.7"/><polygon points="616.0,431.6 623.8,430.8 622.0,435.8 617.4,438.0"/><polygon points="678.0,417.4 680.2,422.6 683.6,424.4 679.4,428.2 674.0,430.8 672.0,429.0 675.2,426.0 676.8,422.0"/><polygon points="673.6,430.0 668.6,433.4 662.8,437.6 656.2,441.8 651.0,445.2 649.4,444.0 649.4,442.2 655.2,438.0 661.8,433.8 668.6,429.6 672.0,428.6"/></clipPath></defs>
<rect x="156.1" y="158.1" width="2.4" height="102.2" fill="#a6d6a2"/>
<rect x="304.6" y="153.9" width="2.4" height="27" fill="#a6d6a2"/>
<rect x="433.3" y="168.6" width="2.4" height="41.2" fill="#a6d6a2"/>
<rect x="544" y="191.2" width="2.4" height="72.6" fill="#a6d6a2"/>
<rect x="389.6" y="259.1" width="2.4" height="80.2" fill="#a6d6a2"/>
<rect x="229.2" y="302.5" width="2.4" height="103.8" fill="#a6d6a2"/>
<rect x="611" y="326.6" width="2.4" height="68.9" fill="#a6d6a2"/>
<g clip-path="url(#land)">
<rect x="156.1" y="158.1" width="2.4" height="102.2" fill="#79c9c2"/>
<rect x="304.6" y="153.9" width="2.4" height="27" fill="#79c9c2"/>
<rect x="433.3" y="168.6" width="2.4" height="41.2" fill="#79c9c2"/>
<rect x="544" y="191.2" width="2.4" height="72.6" fill="#79c9c2"/>
<rect x="389.6" y="259.1" width="2.4" height="80.2" fill="#79c9c2"/>
<rect x="229.2" y="302.5" width="2.4" height="103.8" fill="#79c9c2"/>
<rect x="611" y="326.6" width="2.4" height="68.9" fill="#79c9c2"/>
</g>
<circle cx="157.3" cy="260.3" r="3.6" fill="#64dde6"/>
<g transform="translate(156.1,149.8) scale(0.925)">
<g fill="#6fe2ea"><path d="M-15.8 6.9C-15.8 1 -14.6 -1.5 -13.8 -2.5C-15.2 -4 -15.2 -10.2 -10 -10.2C-5 -10.2 -4.8 -4 -6.2 -2.5C-5.4 -1.5 -4.6 1 -4.6 6.9Z"/><path d="M15.8 6.9C15.8 1 14.6 -1.5 13.8 -2.5C15.2 -4 15.2 -10.2 10 -10.2C5 -10.2 4.8 -4 6.2 -2.5C5.4 -1.5 4.6 1 4.6 6.9Z"/></g>
<path fill="#40b2d8" d="M-8.3 10C-8.3 5 -6.5 2.5 -4.6 1.2C-5.6 -0.5 -5.8 -7.5 0 -7.5C5.8 -7.5 5.6 -0.5 4.6 1.2C6.5 2.5 8.3 5 8.3 10Z"/>
</g>
<circle cx="305.8" cy="180.9" r="3.6" fill="#64dde6"/>
<g transform="translate(304.8,147.7) scale(0.72)">
<g fill="#6fe2ea"><path d="M-15.8 6.9C-15.8 1 -14.6 -1.5 -13.8 -2.5C-15.2 -4 -15.2 -10.2 -10 -10.2C-5 -10.2 -4.8 -4 -6.2 -2.5C-5.4 -1.5 -4.6 1 -4.6 6.9Z"/><path d="M15.8 6.9C15.8 1 14.6 -1.5 13.8 -2.5C15.2 -4 15.2 -10.2 10 -10.2C5 -10.2 4.8 -4 6.2 -2.5C5.4 -1.5 4.6 1 4.6 6.9Z"/></g>
<path fill="#40b2d8" d="M-8.3 10C-8.3 5 -6.5 2.5 -4.6 1.2C-5.6 -0.5 -5.8 -7.5 0 -7.5C5.8 -7.5 5.6 -0.5 4.6 1.2C6.5 2.5 8.3 5 8.3 10Z"/>
</g>
<circle cx="434.5" cy="209.8" r="3.6" fill="#64dde6"/>
<g transform="translate(433.9,162.4) scale(0.72)">
<g fill="#6fe2ea"><path d="M-15.8 6.9C-15.8 1 -14.6 -1.5 -13.8 -2.5C-15.2 -4 -15.2 -10.2 -10 -10.2C-5 -10.2 -4.8 -4 -6.2 -2.5C-5.4 -1.5 -4.6 1 -4.6 6.9Z"/><path d="M15.8 6.9C15.8 1 14.6 -1.5 13.8 -2.5C15.2 -4 15.2 -10.2 10 -10.2C5 -10.2 4.8 -4 6.2 -2.5C5.4 -1.5 4.6 1 4.6 6.9Z"/></g>
<path fill="#40b2d8" d="M-8.3 10C-8.3 5 -6.5 2.5 -4.6 1.2C-5.6 -0.5 -5.8 -7.5 0 -7.5C5.8 -7.5 5.6 -0.5 4.6 1.2C6.5 2.5 8.3 5 8.3 10Z"/>
</g>
<circle cx="545.2" cy="263.8" r="3.6" fill="#64dde6"/>
<g transform="translate(544.4,185) scale(0.72)">
<g fill="#6fe2ea"><path d="M-15.8 6.9C-15.8 1 -14.6 -1.5 -13.8 -2.5C-15.2 -4 -15.2 -10.2 -10 -10.2C-5 -10.2 -4.8 -4 -6.2 -2.5C-5.4 -1.5 -4.6 1 -4.6 6.9Z"/><path d="M15.8 6.9C15.8 1 14.6 -1.5 13.8 -2.5C15.2 -4 15.2 -10.2 10 -10.2C5 -10.2 4.8 -4 6.2 -2.5C5.4 -1.5 4.6 1 4.6 6.9Z"/></g>
<path fill="#40b2d8" d="M-8.3 10C-8.3 5 -6.5 2.5 -4.6 1.2C-5.6 -0.5 -5.8 -7.5 0 -7.5C5.8 -7.5 5.6 -0.5 4.6 1.2C6.5 2.5 8.3 5 8.3 10Z"/>
</g>
<circle cx="390.8" cy="339.3" r="3.6" fill="#64dde6"/>
<g transform="translate(392.1,250.8) scale(0.93)">
<g fill="#6fe2ea"><path d="M-15.8 6.9C-15.8 1 -14.6 -1.5 -13.8 -2.5C-15.2 -4 -15.2 -10.2 -10 -10.2C-5 -10.2 -4.8 -4 -6.2 -2.5C-5.4 -1.5 -4.6 1 -4.6 6.9Z"/><path d="M15.8 6.9C15.8 1 14.6 -1.5 13.8 -2.5C15.2 -4 15.2 -10.2 10 -10.2C5 -10.2 4.8 -4 6.2 -2.5C5.4 -1.5 4.6 1 4.6 6.9Z"/></g>
<path fill="#40b2d8" d="M-8.3 10C-8.3 5 -6.5 2.5 -4.6 1.2C-5.6 -0.5 -5.8 -7.5 0 -7.5C5.8 -7.5 5.6 -0.5 4.6 1.2C6.5 2.5 8.3 5 8.3 10Z"/>
</g>
<circle cx="230.4" cy="406.3" r="3.6" fill="#64dde6"/>
<g transform="translate(230.2,293.5) scale(1.0)">
<g fill="#6fe2ea"><path d="M-15.8 6.9C-15.8 1 -14.6 -1.5 -13.8 -2.5C-15.2 -4 -15.2 -10.2 -10 -10.2C-5 -10.2 -4.8 -4 -6.2 -2.5C-5.4 -1.5 -4.6 1 -4.6 6.9Z"/><path d="M15.8 6.9C15.8 1 14.6 -1.5 13.8 -2.5C15.2 -4 15.2 -10.2 10 -10.2C5 -10.2 4.8 -4 6.2 -2.5C5.4 -1.5 4.6 1 4.6 6.9Z"/></g>
<path fill="#40b2d8" d="M-8.3 10C-8.3 5 -6.5 2.5 -4.6 1.2C-5.6 -0.5 -5.8 -7.5 0 -7.5C5.8 -7.5 5.6 -0.5 4.6 1.2C6.5 2.5 8.3 5 8.3 10Z"/>
</g>
<circle cx="612.2" cy="395.5" r="3.6" fill="#64dde6"/>
<g transform="translate(612,320.3) scale(0.73)">
<g fill="#6fe2ea"><path d="M-15.8 6.9C-15.8 1 -14.6 -1.5 -13.8 -2.5C-15.2 -4 -15.2 -10.2 -10 -10.2C-5 -10.2 -4.8 -4 -6.2 -2.5C-5.4 -1.5 -4.6 1 -4.6 6.9Z"/><path d="M15.8 6.9C15.8 1 14.6 -1.5 13.8 -2.5C15.2 -4 15.2 -10.2 10 -10.2C5 -10.2 4.8 -4 6.2 -2.5C5.4 -1.5 4.6 1 4.6 6.9Z"/></g>
<path fill="#40b2d8" d="M-8.3 10C-8.3 5 -6.5 2.5 -4.6 1.2C-5.6 -0.5 -5.8 -7.5 0 -7.5C5.8 -7.5 5.6 -0.5 4.6 1.2C6.5 2.5 8.3 5 8.3 10Z"/>
</g>
</svg>
    <div class="ptxt" id="tp" style="left:0;width:761px;top:-4.5px;text-align:center">magna aliqua. Ut enim ad minim veniam, quis nostrud<br>exercitation ullamco laboris nisi ut aliquip ex ea<br>commodo consequat. Duis aute irure dolor in<br>reprehenderit in voluptate velit esse cillum dolore eu<br>fugiat nulla pariatur.</div>
    <div class="ptxt" id="bp" style="left:100.5px;width:560px;top:515.9px;line-height:17.27px;text-align:justify;white-space:normal">Lorem ipsum dolor sit amet, consectetur adipiscing elit, sed do eiusmod tempor incididunt ut labore et dolore magna aliqua. Ut enim ad minim veniam, quis nostrud exercitation ullamco laboris nisi ut aliquip ex ea commodo consequat. Duis aute irure dolor in reprehenderit in voluptate velit esse cillum dolore eu fugiat nulla pariatur.</div>
<svg class="abs" style="left:0;top:0" width="761" height="680" viewBox="0 0 761 680">
<g stroke="#2b5484" stroke-width="1">
<line x1="214.5" y1="602.5" x2="214.5" y2="680"/>
<line x1="302.7" y1="602.5" x2="302.7" y2="680"/>
<line x1="390.9" y1="602.5" x2="390.9" y2="680"/>
<line x1="479.1" y1="602.5" x2="479.1" y2="680"/>
<line x1="567.3" y1="602.5" x2="567.3" y2="680"/>
<line x1="655.5" y1="602.5" x2="655.5" y2="680"/>
</g>
<line x1="125.9" y1="602.5" x2="125.9" y2="680" stroke="#3a6596" stroke-width="1"/>
<rect x="126.0" y="603.3" width="177.5" height="9.8" fill="#46b4d6"/>
<rect x="126.0" y="612.1" width="177.5" height="1" fill="#3aa6b6"/>
<rect x="126.0" y="613.1" width="247.0" height="9.8" fill="#6fe0ea"/>
<rect x="126.0" y="622.9" width="106.3" height="9.8" fill="#0b5a9d"/>
<rect x="126.0" y="632.7" width="106.3" height="2.2" fill="#00264f"/>
<rect x="126.0" y="635.6" width="265.0" height="9.2" fill="#46b4d6"/>
<rect x="126.0" y="643.8" width="265.0" height="1" fill="#3aa6b6"/>
<rect x="126.0" y="644.8" width="247.0" height="9.8" fill="#6fe0ea"/>
<rect x="126.0" y="654.6" width="194.3" height="9.8" fill="#0b5a9d"/>
<rect x="126.0" y="664.4" width="194.3" height="2.2" fill="#00264f"/>
<rect x="126.0" y="667.5" width="423.2" height="10.1" fill="#46b4d6"/>
<rect x="126.0" y="676.6" width="423.2" height="1" fill="#3aa6b6"/>
<rect x="126.0" y="677.6" width="282.3" height="9.4" fill="#6fe0ea"/>
<g font-family="'Liberation Sans',sans-serif" font-size="7.7" fill="#e6ebf2" text-anchor="end"><text x="120.8" y="620.8">Item 1</text><text x="120.8" y="652.6">Item 2</text><text x="120.8" y="684.6">Item 3</text></g>
</svg>
  </div></div>
  <div id="mscroll"></div>
</div>
<div id="status">
  <div class="l">No changes made</div>
<span class="r" id="sv" style="left:742.5px;font-family:'Liberation Mono',monospace;font-size:9.2px">v1.0.1</span>
<span class="r" id="s1" style="left:788.2px">Source</span>
<span class="r" style="left:823.2px">·</span>
<span class="r" id="s2" style="left:830.7px;letter-spacing:-0.5px">GPLv3</span>
<span class="r" style="left:862.3px">·</span>
<span class="r" id="s3" style="left:868.4px;letter-spacing:-0.2px">NO WARRANTY</span>
<span class="r" id="s4" style="left:951.4px">© 2026 &nbsp;Steve the Killer</span>
<svg class="abs" style="left:1055.5px;top:13.5px" width="14" height="14" viewBox="0 0 14 14"><g fill="#8a8a8a"><rect x="10" y="2" width="1.6" height="1.6"/><rect x="7" y="5" width="1.6" height="1.6"/><rect x="10" y="5" width="1.6" height="1.6"/><rect x="4" y="8" width="1.6" height="1.6"/><rect x="7" y="8" width="1.6" height="1.6"/><rect x="10" y="8" width="1.6" height="1.6"/><rect x="1" y="11" width="1.6" height="1.6"/><rect x="4" y="11" width="1.6" height="1.6"/><rect x="7" y="11" width="1.6" height="1.6"/><rect x="10" y="11" width="1.6" height="1.6"/></g></svg>

</div>
</body>
</html>
